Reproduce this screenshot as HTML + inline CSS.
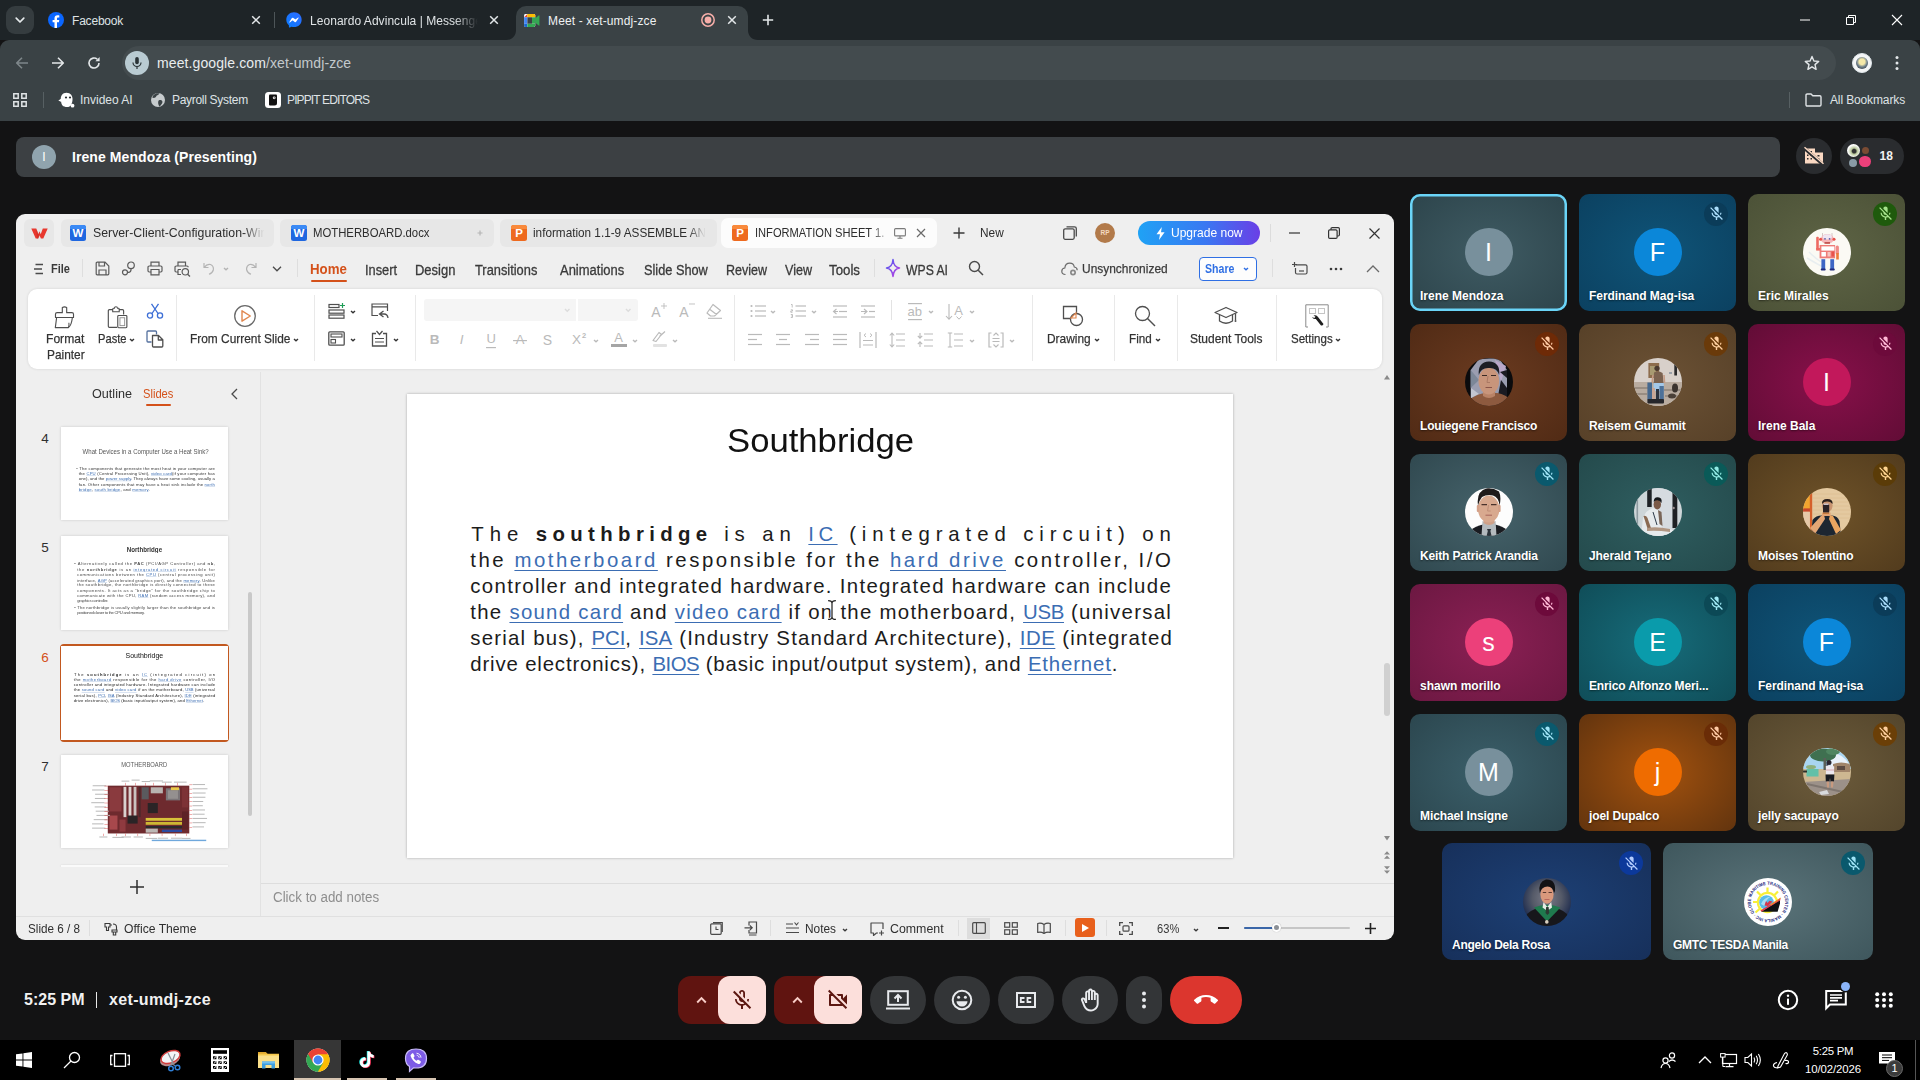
<!DOCTYPE html>
<html>
<head>
<meta charset="utf-8">
<title>Meet</title>
<style>
*{box-sizing:border-box;margin:0;padding:0}
html,body{width:1920px;height:1080px;overflow:hidden;background:#131314;font-family:"Liberation Sans",sans-serif;}
#root{position:fixed;left:0;top:0;width:1920px;height:1080px;overflow:hidden;background:#131314}
.abs{position:absolute}
svg{position:absolute;overflow:visible}
/* ---------- chrome ---------- */
#tabstrip{left:0;top:0;width:1920px;height:40px;background:#1e2427}
#toolbar{left:0;top:40px;width:1920px;height:80.6px;background:#3a4245;border-radius:9px 9px 0 0}
#omni{left:122px;top:46px;width:1714px;height:34px;border-radius:17px;background:#434b4e}
.tabtxt{font-size:12px;color:#dfe3e5;white-space:nowrap;top:13px;line-height:16px}
.bm{font-size:12px;color:#dfe3e5;white-space:nowrap;top:92px;line-height:16px}
#acttab{left:516px;top:6px;width:232px;height:34px;background:#3a4245;border-radius:10px 10px 0 0}
/* ---------- meet ---------- */
#presbar{left:16px;top:137px;width:1764px;height:40px;border-radius:8px;background:#3c4043}
.tile{position:absolute;width:157px;height:117px;border-radius:10px;overflow:hidden}
.tile .nm{position:absolute;left:10px;bottom:8px;font-size:12px;font-weight:bold;color:#fff;white-space:nowrap;text-shadow:0 1px 2px rgba(0,0,0,.5)}
.tile .av{position:absolute;left:50%;top:34.600px;width:48px;height:48px;margin-left:-24px;border-radius:50%;overflow:hidden;color:#fff;font-size:25px;line-height:48px;text-align:center}
.tile .mic{position:absolute;right:8px;top:8px;width:24px;height:24px;border-radius:50%}
/* ---------- wps ---------- */
#wps{left:16px;top:214px;width:1378px;height:726px;border-radius:9px;background:#efefef;overflow:hidden}
#ribbon{left:12px;top:75px;width:1354px;height:79.5px;border-radius:9px;background:#fff;box-shadow:0 0 3px rgba(0,0,0,.12)}
.rt{position:absolute;font-size:13px;color:#222;white-space:nowrap;line-height:16px}
.mt{position:absolute;font-size:14.3px;color:#333;white-space:nowrap;line-height:18px;top:46px}
#slide{left:391px;top:180px;width:825.5px;height:464px;background:#fff;box-shadow:0 0 2.5px rgba(0,0,0,.3)}
.sl{white-space:pre}
.lk{color:#3b6db3;text-decoration:underline;text-decoration-thickness:1px;text-underline-offset:2.5px}
.thumb{position:absolute;left:45px;width:167px;height:94px;background:#fff;box-shadow:0 0 2px rgba(0,0,0,.18)}
.tn{position:absolute;left:25px;font-size:13px;color:#333}
/* ---------- taskbar ---------- */
#taskbar{left:0;top:1040px;width:1920px;height:40px;background:#000}
</style>
</head>
<body>
<div id="root">

<!-- CHROME -->
<div id="tabstrip" class="abs"></div>
<div id="toolbar" class="abs"></div>
<div id="acttab" class="abs"></div>
<div id="omni" class="abs"></div>
<!--CHROME-DETAILS-START-->
<!-- tab search -->
<div class="abs" style="left:6px;top:6px;width:28px;height:28px;border-radius:9px;background:#353c3f"></div>
<svg style="left:14px;top:14px" width="12" height="12" viewBox="0 0 12 12"><path d="M2.2 4.2 L6 8 L9.8 4.2" fill="none" stroke="#e6eaec" stroke-width="1.7" stroke-linecap="round" stroke-linejoin="round"/></svg>
<!-- tab 1 facebook -->
<svg style="left:48px;top:12px" width="16" height="16" viewBox="0 0 16 16"><circle cx="8" cy="8" r="8" fill="#0a66ff"/><path d="M9 16 V10.3 h1.9 l.35-2.3 H9 V6.6 c0-.8.3-1.2 1.2-1.2 h1.1 V3.4 c-.3-.05-1-.13-1.8-.13 -1.9 0-3 1.1-3 3.1 V8 H4.6 v2.3 h1.9 V16z" fill="#fff"/></svg>
<div class="abs tabtxt" style="left:72px;letter-spacing:-.2px">Facebook</div>
<svg style="left:251px;top:15px" width="10" height="10" viewBox="0 0 10 10"><path d="M1.2 1.2 L8.8 8.8 M8.8 1.2 L1.2 8.8" stroke="#e3e7e9" stroke-width="1.5" fill="none"/></svg>
<div class="abs" style="left:274px;top:12px;width:1px;height:16px;background:#4d5558"></div>
<!-- tab 2 messenger -->
<svg style="left:286px;top:12px" width="16" height="16" viewBox="0 0 16 16"><defs><linearGradient id="msg" x1="0" y1="1" x2="1" y2="0"><stop offset="0" stop-color="#0a7cff"/><stop offset="1" stop-color="#2f6bff"/></linearGradient></defs><path d="M8 0.3C3.6.3.3 3.5.3 7.7c0 2.2.9 4.1 2.4 5.4.1.1.2.3.2.5l.04 1.4c.01.4.5.7.9.5l1.5-.7c.13-.06.28-.07.4-.03.7.2 1.45.3 2.2.3 4.4 0 7.7-3.2 7.7-7.4S12.400.3 8 .3z" fill="url(#msg)"/><path d="M3.4 9.9 5.7 6.300c.36-.57 1.1-.7 1.65-.3l1.8 1.35c.17.12.4.12.55 0l2.400-1.85c.32-.25.75.15.53.5L10.300 9.600c-.36.57-1.1.7-1.65.3L6.850 8.550c-.17-.12-.4-.12-.55 0L3.900 10.400c-.32.25-.75-.15-.53-.5z" fill="#fff"/></svg>
<div class="abs tabtxt" style="left:310px;width:168px;overflow:hidden;letter-spacing:.05px;-webkit-mask-image:linear-gradient(90deg,#000 86%,transparent 100%)">Leonardo Advincula | Messenger</div>
<svg style="left:489px;top:15px" width="10" height="10" viewBox="0 0 10 10"><path d="M1.2 1.2 L8.8 8.8 M8.8 1.2 L1.2 8.8" stroke="#e3e7e9" stroke-width="1.5" fill="none"/></svg>
<!-- active tab flares -->
<svg style="left:506px;top:30px" width="10" height="10" viewBox="0 0 10 10"><path d="M0 10 H10 V0 C10 6 6 10 0 10z" fill="#3a4245"/></svg>
<svg style="left:748px;top:30px" width="10" height="10" viewBox="0 0 10 10"><path d="M10 10 H0 V0 C0 6 4 10 10 10z" fill="#3a4245"/></svg>
<!-- meet icon -->
<svg style="left:524px;top:13.500px" width="16" height="13" viewBox="0 0 17 14"><rect x="0" y="0" width="12" height="14" rx="1.5" fill="#fff"/><path d="M0 3.500 L3.500 0 V3.500z" fill="#ea4335"/><path d="M3.500 0 H10.500 Q12 0 12 1.500 V3.500 H3.500z" fill="#fbbc04"/><path d="M0 3.500 H3.500 V10.500 H0z" fill="#4285f4"/><path d="M0 10.500 H3.500 V14 H1.500 Q0 14 0 12.500z" fill="#1967d2"/><path d="M3.500 10.500 H12 V12.500 Q12 14 10.500 14 H3.500z" fill="#34a853"/><path d="M8.500 3.500 H12 V10.500 H8.500z" fill="#34a853"/><path d="M3.500 3.500 H8.500 V10.500 H3.500z" fill="#3a4245"/><path d="M12 4.500 L15.700 1.500 Q16.500 1 16.500 2 V12 Q16.500 13 15.700 12.500 L12 9.500z" fill="#34a853"/></svg>
<div class="abs tabtxt" style="left:548px;letter-spacing:.13px;color:#eef1f2">Meet - xet-umdj-zce</div>
<svg style="left:700px;top:12px" width="16" height="16" viewBox="0 0 16 16"><circle cx="8" cy="8" r="6.2" fill="none" stroke="#f6aea9" stroke-width="1.5"/><circle cx="8" cy="8" r="3.4" fill="#f6aea9"/></svg>
<svg style="left:727px;top:15px" width="10" height="10" viewBox="0 0 10 10"><path d="M1.2 1.2 L8.8 8.8 M8.8 1.2 L1.2 8.8" stroke="#e3e7e9" stroke-width="1.5" fill="none"/></svg>
<svg style="left:762px;top:14px" width="12" height="12" viewBox="0 0 12 12"><path d="M6 .8 V11.200 M.8 6 H11.200" stroke="#e3e7e9" stroke-width="1.6" fill="none"/></svg>
<!-- window controls -->
<svg style="left:1800px;top:15px" width="10" height="10" viewBox="0 0 10 10"><path d="M0 5 H10" stroke="#fff" stroke-width="1"/></svg>
<svg style="left:1846px;top:15px" width="10" height="10" viewBox="0 0 10 10"><path d="M.5 2.500 H7.500 V9.500 H.5z M2.500 2.500 V.5 H9.500 V7.500 H7.500" stroke="#fff" stroke-width="1" fill="none"/></svg>
<svg style="left:1892px;top:15px" width="10" height="10" viewBox="0 0 10 10"><path d="M0 0 L10 10 M10 0 L0 10" stroke="#fff" stroke-width="1.1"/></svg>
<!-- nav buttons -->
<svg style="left:15px;top:56px" width="14" height="14" viewBox="0 0 14 14"><path d="M13 7 H2 M7 1.700 L1.700 7 L7 12.300" stroke="#7e878a" stroke-width="1.6" fill="none" stroke-linejoin="round"/></svg>
<svg style="left:51px;top:56px" width="14" height="14" viewBox="0 0 14 14"><path d="M1 7 H12 M7 1.700 L12.300 7 L7 12.300" stroke="#e3e7e9" stroke-width="1.6" fill="none" stroke-linejoin="round"/></svg>
<svg style="left:87px;top:56px" width="14" height="14" viewBox="0 0 14 14"><path d="M12 7 A5 5 0 1 1 10.300 3.250" stroke="#e3e7e9" stroke-width="1.6" fill="none"/><path d="M12.600 1 V5.200 H8.400z" fill="#e3e7e9"/></svg>
<!-- mic chip -->
<div class="abs" style="left:125px;top:51px;width:24px;height:24px;border-radius:12px;background:#b9cbd2"></div>
<svg style="left:131px;top:56px" width="12" height="14" viewBox="0 0 12 14"><rect x="4.200" y="1" width="3.600" height="7.200" rx="1.800" fill="#2a3336"/><path d="M2 6.500 A4 4 0 0 0 10 6.500 M6 10.500 V13" stroke="#2a3336" stroke-width="1.200" fill="none"/></svg>
<div class="abs" style="left:157px;top:54px;font-size:14px;line-height:18px;color:#e9edef;white-space:nowrap;letter-spacing:.1px">meet.google.com<span style="color:#c3c9cc">/xet-umdj-zce</span></div>
<!-- star, avatar, menu -->
<svg style="left:1804px;top:55px" width="16" height="16" viewBox="0 0 16 16"><path d="M8 1.500 L9.900 6 L14.700 6.400 L11 9.600 L12.100 14.300 L8 11.800 L3.900 14.300 L5 9.600 L1.300 6.400 L6.100 6z" fill="none" stroke="#e3e7e9" stroke-width="1.400" stroke-linejoin="round"/></svg>
<div class="abs" style="left:1852px;top:53px;width:20px;height:20px;border-radius:10px;background:#f4f6f7;border:1.500px solid #dfe6ea"></div>
<div class="abs" style="left:1856px;top:57px;width:12px;height:12px;border-radius:6px;background:radial-gradient(circle at 50% 40%,#f5e9a8 0 30%,#6d7f8c 55%,#222 100%)"></div>
<svg style="left:1895px;top:55px" width="4" height="16" viewBox="0 0 4 16"><circle cx="2" cy="2.500" r="1.500" fill="#e3e7e9"/><circle cx="2" cy="8" r="1.500" fill="#e3e7e9"/><circle cx="2" cy="13.500" r="1.500" fill="#e3e7e9"/></svg>
<!-- bookmarks -->
<svg style="left:13px;top:93px" width="14" height="14" viewBox="0 0 14 14"><path d="M.8.8h4.400v4.400H.8z M8.800.8h4.400v4.400H8.800z M.8 8.800h4.400v4.400H.8z M8.800 8.800h4.400v4.400H8.800z" fill="none" stroke="#dfe3e5" stroke-width="1.500"/></svg>
<div class="abs" style="left:43px;top:92px;width:1px;height:16px;background:#576063"></div>
<svg style="left:58px;top:92px" width="17" height="16" viewBox="0 0 17 16"><path d="M3 9 C2 4 4.500 .8 8.500 .8 S15 4 14.500 8 C14.300 10.500 13.500 13.500 11.500 14.500 C9.500 15.500 6 15 4.500 13.500 C3.500 12.500 3.200 10.500 3 9z" fill="#fff"/><path d="M3.500 6.500 L.3 8.500 L3.300 10z" fill="#fff"/><circle cx="14.500" cy="13.700" r="1.900" fill="#fff"/><circle cx="8" cy="5.500" r="1.100" fill="#2a3033"/><circle cx="12" cy="5.500" r="1.100" fill="#2a3033"/></svg>
<div class="abs bm" style="left:80px">Invideo AI</div>
<svg style="left:150px;top:92px" width="16" height="16" viewBox="0 0 16 16"><circle cx="8" cy="8" r="7" fill="#c6cbcd"/><path d="M2.200 5.500 C4 6.300 5.500 5.800 6.300 4.300 C6.800 3.300 8 3.400 8.600 2.600 L9.400 1.300 C8.500 1.100 7 1 5.800 1.500 C4.200 2.200 2.800 3.700 2.200 5.500z M9 8.300 C10.300 7.600 11.800 8.200 12.300 9.300 C12.800 10.500 12 11.500 11.300 12.600 C10.800 13.300 10.300 13.800 9.700 14.600 C9 13.500 8.300 12.600 8.200 11.400 C8.100 10.200 8.200 8.900 9 8.300z" fill="#3a4245"/></svg>
<div class="abs bm" style="left:172px;letter-spacing:-.3px">Payroll System</div>
<div class="abs" style="left:265px;top:92px;width:16px;height:16px;border-radius:3.500px;background:#fff"></div>
<svg style="left:268px;top:94px" width="10" height="12" viewBox="0 0 10 12"><path d="M1 1.500 Q1 .5 2 .5 H8 Q9 .5 9 1.500 V9 Q9 11.500 6.500 11.500 H2 Q1 11.500 1 10.500z" fill="#111"/><circle cx="6.200" cy="3.800" r="1.400" fill="#fff"/><circle cx="6.200" cy="3.800" r=".6" fill="#111"/></svg>
<div class="abs bm" style="left:287px;letter-spacing:-.87px">PIPPIT EDITORS</div>
<div class="abs" style="left:1789px;top:92px;width:1px;height:16px;background:#576063"></div>
<svg style="left:1805px;top:93px" width="17" height="14" viewBox="0 0 17 14"><path d="M1 2.200 Q1 1 2.200 1 H6 L7.800 2.800 H14.800 Q16 2.800 16 4 V11.800 Q16 13 14.800 13 H2.200 Q1 13 1 11.800z" fill="none" stroke="#dfe3e5" stroke-width="1.400"/></svg>
<div class="abs bm" style="left:1830px;letter-spacing:-.13px">All Bookmarks</div>
<!--CHROME-DETAILS-END-->

<!-- MEET -->
<div id="presbar" class="abs"></div>
<!--MEET-DETAILS-START-->
<div class="abs" style="left:32px;top:145px;width:24px;height:24px;border-radius:12px;background:#90a4ae;color:#fff;font-size:12px;line-height:24px;text-align:center">I</div>
<div class="abs" style="left:72px;top:148px;font-size:14px;font-weight:bold;color:#fff;line-height:18px;white-space:nowrap;letter-spacing:.08px">Irene Mendoza (Presenting)</div>
<div class="abs" style="left:1796px;top:138px;width:36px;height:36px;border-radius:18px;background:#2a2c2f"></div>
<svg style="left:1804px;top:147px" width="20" height="18" viewBox="0 0 20 18"><path d="M1 1.500 V16.500 H19 V5.500 H11 V1.500z" fill="#fbd9c3"/><g fill="#2a2c2f"><rect x="3" y="4" width="1.500" height="1.500"/><rect x="6.500" y="4" width="1.500" height="1.500"/><rect x="3" y="7.500" width="1.500" height="1.500"/><rect x="6.500" y="7.500" width="1.500" height="1.500"/><rect x="3" y="11" width="1.500" height="1.500"/><rect x="6.500" y="11" width="1.500" height="1.500"/><rect x="13.500" y="8" width="2" height="1.500"/><rect x="13.500" y="11.500" width="2" height="1.500"/></g><path d="M0 1 L19 17.500" stroke="#2a2c2f" stroke-width="3.200"/><path d="M.5 .3 L19.500 16.800" stroke="#fbd9c3" stroke-width="1.500"/></svg>
<div class="abs" style="left:1840px;top:138px;width:64px;height:36px;border-radius:18px;background:#2a2c2f"></div>
<div class="abs" style="left:1847px;top:143.500px;width:13px;height:13px;border-radius:50%;background:radial-gradient(circle at 55% 55%,#333 0 18%,#b9c79a 30%,#fff 62%)"></div>
<div class="abs" style="left:1861.500px;top:146.500px;width:7px;height:7px;border-radius:50%;background:#7a4b33"></div>
<div class="abs" style="left:1849px;top:159px;width:8px;height:8px;border-radius:50%;background:#8a9ba6"></div>
<div class="abs" style="left:1859px;top:155.500px;width:11.500px;height:11.500px;border-radius:50%;background:#ec407a"></div>
<div class="abs" style="left:1879.500px;top:148px;font-size:12px;font-weight:bold;color:#f1f1f1;line-height:16px">18</div>
<!--MEET-DETAILS-END-->

<!-- WPS -->
<div id="wps" class="abs">
  <div id="ribbon" class="abs"></div>
  <div id="slide" class="abs"><!--SLIDE-START--><div class="abs" style="left:319.5px;top:26.9px;font-size:33.500px;line-height:40px;color:#111;white-space:nowrap;transform:scaleX(1.0350);transform-origin:0 50%">Southbridge</div><div class="abs sl" style="left:64.3px;top:127.0px;font-size:20.4px;line-height:26px;letter-spacing:5.913px;color:#1c1c1c">The <b><span style="letter-spacing:5.363px">southbridge</span></b> is an <span class="lk"><span style="letter-spacing:4.413px">IC</span></span> (integrated circuit) on</div><div class="abs sl" style="left:63.3px;top:153.0px;font-size:20.4px;line-height:26px;letter-spacing:2.527px;color:#1c1c1c">the <span class="lk">motherboard</span> responsible for the <span class="lk">hard drive</span> controller, I/O</div><div class="abs sl" style="left:63.3px;top:179.0px;font-size:20.4px;line-height:26px;letter-spacing:1.322px;color:#1c1c1c">controller and integrated hardware. Integrated hardware can include</div><div class="abs sl" style="left:63.3px;top:204.9px;font-size:20.4px;line-height:26px;letter-spacing:1.275px;color:#1c1c1c">the <span class="lk">sound card</span> and <span class="lk">video card</span> if on the motherboard, <span class="lk"><span style="letter-spacing:-0.325px">USB</span></span> (universal</div><div class="abs sl" style="left:63.3px;top:230.8px;font-size:20.4px;line-height:26px;letter-spacing:1.218px;color:#1c1c1c">serial bus), <span class="lk"><span style="letter-spacing:-0.082px">PCI</span></span>, <span class="lk"><span style="letter-spacing:0.118px">ISA</span></span> (Industry Standard Architecture), <span class="lk"><span style="letter-spacing:0.518px">IDE</span></span> (integrated</div><div class="abs sl" style="left:63.3px;top:256.8px;font-size:20.4px;line-height:26px;letter-spacing:0.832px;color:#1c1c1c">drive electronics), <span class="lk"><span style="letter-spacing:-0.468px">BIOS</span></span> (basic input/output system), and <span class="lk">Ethernet</span>.</div><!--SLIDE-END--></div>
  <!--WPS-DETAILS-->
</div>

<!--WPSX-START-->
<div class="abs" style="left:24px;top:219px;width:30px;height:28px;background:#e7e7e7;border-radius:6px"></div>
<svg style="left:30.5px;top:227.0px" width="17" height="12" viewBox="0 0 17 12"><path d="M.3 1.600 H5.200 L7.300 7.200 L8.500 4.300 L9.700 7.200 L11.800 1.600 H16.700 L12.300 11.400 H9.900 L8.500 8.200 L7.100 11.400 H4.700z" fill="#e8382e"/><path d="M5.200 1.600 L8.500 9 L7.300 11.400 H6z" fill="#c92a22" opacity=".55"/></svg>
<div class="abs" style="left:61px;top:219px;width:213px;height:28px;background:#e7e7e7;border-radius:6px"></div>
<div class="abs" style="left:280px;top:219px;width:214px;height:28px;background:#e7e7e7;border-radius:6px"></div>
<div class="abs" style="left:500px;top:219px;width:217px;height:28px;background:#e7e7e7;border-radius:6px"></div>
<div class="abs" style="left:721px;top:218px;width:216px;height:30px;background:#fcfcfc;border-radius:7px"></div>
<svg style="left:70.0px;top:225.0px" width="16" height="16" viewBox="0 0 16 16"><rect width="16" height="16" rx="2.500" fill="#1f67e0"/><rect x="0" y="0" width="16" height="8" rx="2.500" fill="#3b8af5"/><rect x="0" y="4" width="16" height="8" fill="#1f67e0"/><text x="8" y="12.300" font-family="Liberation Sans" font-weight="bold" font-size="11.500" fill="#fff" text-anchor="middle">W</text></svg>
<div class="abs" style="left:92.5px;top:224.4px;font-size:13px;font-weight:normal;color:#2d2d2d;line-height:17px;white-space:nowrap;transform:scaleX(0.9458);transform-origin:0 50%;-webkit-mask-image:linear-gradient(90deg,#000 88%,transparent 100%);">Server-Client-Configuration-Wir</div>
<svg style="left:290.5px;top:225.0px" width="16" height="16" viewBox="0 0 16 16"><rect width="16" height="16" rx="2.500" fill="#1f67e0"/><rect x="0" y="0" width="16" height="8" rx="2.500" fill="#3b8af5"/><rect x="0" y="4" width="16" height="8" fill="#1f67e0"/><text x="8" y="12.300" font-family="Liberation Sans" font-weight="bold" font-size="11.500" fill="#fff" text-anchor="middle">W</text></svg>
<div class="abs" style="left:313.0px;top:224.4px;font-size:13px;font-weight:normal;color:#2d2d2d;line-height:17px;white-space:nowrap;transform:scaleX(0.8717);transform-origin:0 50%;">MOTHERBOARD.docx</div>
<svg style="left:476.5px;top:230.0px" width="6" height="6" viewBox="0 0 6 6"><path d="M3 .5 V5.500 M.5 3 H5.500" stroke="#b5b5b5" stroke-width="1.200"/></svg>
<svg style="left:510.5px;top:225.0px" width="16" height="16" viewBox="0 0 16 16"><rect width="16" height="16" rx="2.500" fill="#ee6a1f"/><rect x="0" y="0" width="16" height="8" rx="2.500" fill="#f98a3c"/><rect x="0" y="4" width="16" height="8" fill="#ee6a1f"/><text x="8" y="12.300" font-family="Liberation Sans" font-weight="bold" font-size="11.500" fill="#fff" text-anchor="middle">P</text></svg>
<div class="abs" style="left:533.0px;top:224.4px;font-size:13px;font-weight:normal;color:#2d2d2d;line-height:17px;white-space:nowrap;transform:scaleX(0.9035);transform-origin:0 50%;-webkit-mask-image:linear-gradient(90deg,#000 90%,transparent 100%);">information 1.1-9 ASSEMBLE AN</div>
<svg style="left:732.0px;top:225.0px" width="16" height="16" viewBox="0 0 16 16"><rect width="16" height="16" rx="2.500" fill="#ee6a1f"/><rect x="0" y="0" width="16" height="8" rx="2.500" fill="#f98a3c"/><rect x="0" y="4" width="16" height="8" fill="#ee6a1f"/><text x="8" y="12.300" font-family="Liberation Sans" font-weight="bold" font-size="11.500" fill="#fff" text-anchor="middle">P</text></svg>
<div class="abs" style="left:754.7px;top:224.4px;font-size:13px;font-weight:normal;color:#2d2d2d;line-height:17px;white-space:nowrap;transform:scaleX(0.8551);transform-origin:0 50%;-webkit-mask-image:linear-gradient(90deg,#000 90%,rgba(0,0,0,.35) 100%);">INFORMATION SHEET 1.</div>
<svg style="left:893.5px;top:227.5px" width="12" height="11" viewBox="0 0 12 11"><rect x=".6" y=".6" width="10.800" height="7.300" rx="1" fill="none" stroke="#7a7a7a" stroke-width="1.100"/><path d="M6 8 V10 M3.500 10.300 H8.500" stroke="#7a7a7a" stroke-width="1.100"/></svg>
<svg style="left:916.3px;top:228.0px" width="10" height="10" viewBox="0 0 10 10"><path d="M1 1 L9 9 M9 1 L1 9" stroke="#6a6a6a" stroke-width="1.200"/></svg>
<svg style="left:953.0px;top:227.0px" width="12" height="12" viewBox="0 0 12 12"><path d="M6 .5 V11.500 M.5 6 H11.500" stroke="#3a3a3a" stroke-width="1.400"/></svg>
<div class="abs" style="left:980.0px;top:224.4px;font-size:13px;font-weight:normal;color:#2d2d2d;line-height:17px;white-space:nowrap;transform:scaleX(0.9110);transform-origin:0 50%;">New</div>
<svg style="left:1063.4px;top:226.0px" width="14" height="14" viewBox="0 0 14 14"><rect x=".7" y="2.800" width="10.500" height="10.500" rx="1.500" fill="none" stroke="#4a4a4a" stroke-width="1.300"/><path d="M3.500 .8 H11.500 Q13.300 .8 13.300 2.600 V10.500" fill="none" stroke="#4a4a4a" stroke-width="1.300"/></svg>
<div class="abs" style="left:1095px;top:223px;width:20px;height:20px;border-radius:50%;background:#b27a4a;color:#f4d9c0;font-size:6.500px;font-weight:bold;line-height:20px;text-align:center">RP</div>
<div class="abs" style="left:1137.5px;top:221px;width:122px;height:24px;background:linear-gradient(90deg,#1fa2f5 0%,#3a78f2 55%,#6a3fe6 100%);border-radius:12px"></div>
<svg style="left:1155.5px;top:226.5px" width="9" height="13" viewBox="0 0 9 13"><path d="M5.800 0 L.5 7.300 H4 L3 13 L8.600 5.300 H5z" fill="#fff"/></svg>
<div class="abs" style="left:1171.0px;top:224.4px;font-size:13px;font-weight:normal;color:#fff;line-height:17px;white-space:nowrap;transform:scaleX(0.9246);transform-origin:0 50%;">Upgrade now</div>
<div class="abs" style="left:1270px;top:224px;width:1px;height:18px;background:#dcdcdc;"></div>
<svg style="left:1288.5px;top:232.0px" width="11" height="2" viewBox="0 0 11 2"><path d="M0 1 H11" stroke="#333" stroke-width="1.200"/></svg>
<svg style="left:1328.0px;top:227.0px" width="12" height="12" viewBox="0 0 12 12"><rect x=".6" y="2.900" width="8.500" height="8.500" rx="1.200" fill="none" stroke="#333" stroke-width="1.200"/><path d="M3 2.700 V1.800 Q3 .6 4.200 .6 H10.200 Q11.400 .6 11.400 1.800 V7.800 Q11.400 9 10.200 9 H9.300" fill="none" stroke="#333" stroke-width="1.200"/></svg>
<svg style="left:1369.0px;top:227.5px" width="11" height="11" viewBox="0 0 11 11"><path d="M.5 .5 L10.500 10.500 M10.500 .5 L.5 10.500" stroke="#333" stroke-width="1.200"/></svg>
<svg style="left:34.0px;top:262.5px" width="10" height="12" viewBox="0 0 10 12"><path d="M1.500 1.500 H9 M0 6 H8 M1.500 10.500 H9" stroke="#4a4a4a" stroke-width="1.300"/></svg>
<div class="abs" style="left:51.0px;top:260.0px;font-size:13.5px;font-weight:bold;color:#3a3a3a;line-height:18px;white-space:nowrap;transform:scaleX(0.8167);transform-origin:0 50%;">File</div>
<div class="abs" style="left:82px;top:259px;width:1px;height:18px;background:#dedede;"></div>
<svg style="left:94.9px;top:261.0px" width="15" height="15" viewBox="0 0 15 15"><path d="M1.200 2.200 Q1.200 1.200 2.200 1.200 H10 L13.800 5 V12.800 Q13.800 13.800 12.800 13.800 H2.200 Q1.200 13.800 1.200 12.800z M4 1.500 V5 H9.500 V1.500 M4 13.500 V9 H11 V13.500" fill="none" stroke="#5a5a5a" stroke-width="1.200"/></svg>
<svg style="left:120.8px;top:261.0px" width="15" height="15" viewBox="0 0 15 15"><circle cx="10" cy="4.300" r="3.300" fill="none" stroke="#5a5a5a" stroke-width="1.200"/><circle cx="4" cy="11.300" r="2.500" fill="none" stroke="#5a5a5a" stroke-width="1.200"/><path d="M6.500 11.300 H7.500 Q10 11.300 10 8.800 V7.600" fill="none" stroke="#5a5a5a" stroke-width="1.200"/></svg>
<svg style="left:147.3px;top:261.0px" width="16" height="15" viewBox="0 0 16 15"><path d="M4 5 V1.200 H12 V5 M4 11 H2.200 Q1 11 1 9.800 V6.200 Q1 5 2.200 5 H13.800 Q15 5 15 6.200 V9.800 Q15 11 13.800 11 H12 M4 8.500 H12 V13.800 H4z" fill="none" stroke="#5a5a5a" stroke-width="1.200"/></svg>
<svg style="left:173.5px;top:260.5px" width="17" height="16" viewBox="0 0 17 16"><path d="M4 5 V1.200 H11.500 V5 M4 11 H2.200 Q1 11 1 9.800 V6.200 Q1 5 2.200 5 H13 Q14.200 5 14.200 6.200 M4 8.500 H7 M4 8.500 V13.500 H7" fill="none" stroke="#5a5a5a" stroke-width="1.200"/><circle cx="11.300" cy="10.800" r="3.200" fill="none" stroke="#5a5a5a" stroke-width="1.200"/><path d="M13.600 13.200 L16 15.500" stroke="#5a5a5a" stroke-width="1.300"/></svg>
<svg style="left:203.3px;top:262.0px" width="12" height="13" viewBox="0 0 12 13"><path d="M1 1 V5.500 H5.500 M1.300 5.300 Q4 1.500 7.500 2.500 Q11 4 10.300 8 Q9.500 11 6 12.300" fill="none" stroke="#b4b4b4" stroke-width="1.200"/></svg>
<svg style="left:223.0px;top:267.0px" width="6" height="4" viewBox="0 0 6 4"><path d="M1 1 L3.0 2.8 L5 1" fill="none" stroke="#b4b4b4" stroke-width="1.4"/></svg>
<svg style="left:244.8px;top:262.0px" width="12" height="13" viewBox="0 0 12 13"><path d="M11 1 V5.500 H6.500 M10.700 5.300 Q8 1.500 4.500 2.500 Q1 4 1.700 8 Q2.500 11 6 12.300" fill="none" stroke="#b4b4b4" stroke-width="1.200"/></svg>
<svg style="left:271.7px;top:266.0px" width="10" height="6" viewBox="0 0 10 6"><path d="M1 .8 L5 4.800 L9 .8" fill="none" stroke="#4a4a4a" stroke-width="1.300"/></svg>
<div class="abs" style="left:297px;top:259px;width:1px;height:18px;background:#dedede;"></div>
<div class="abs" style="left:310.2px;top:260.3px;font-size:14px;font-weight:bold;color:#d4511a;line-height:18px;white-space:nowrap;transform:scaleX(0.9459);transform-origin:0 50%;">Home</div>
<div class="abs" style="left:311px;top:280px;width:35.5px;height:2px;background:#d4511a;border-radius:1px"></div>
<div class="abs" style="left:364.6px;top:260.6px;font-size:14px;font-weight:normal;color:#3a3a3a;line-height:18px;white-space:nowrap;transform:scaleX(0.9139);transform-origin:0 50%;-webkit-text-stroke:.3px #3a3a3a;">Insert</div>
<div class="abs" style="left:414.9px;top:260.6px;font-size:14px;font-weight:normal;color:#3a3a3a;line-height:18px;white-space:nowrap;transform:scaleX(0.9267);transform-origin:0 50%;-webkit-text-stroke:.3px #3a3a3a;">Design</div>
<div class="abs" style="left:474.7px;top:260.6px;font-size:14px;font-weight:normal;color:#3a3a3a;line-height:18px;white-space:nowrap;transform:scaleX(0.9168);transform-origin:0 50%;-webkit-text-stroke:.3px #3a3a3a;">Transitions</div>
<div class="abs" style="left:559.6px;top:260.6px;font-size:14px;font-weight:normal;color:#3a3a3a;line-height:18px;white-space:nowrap;transform:scaleX(0.9269);transform-origin:0 50%;-webkit-text-stroke:.3px #3a3a3a;">Animations</div>
<div class="abs" style="left:644.2px;top:260.6px;font-size:14px;font-weight:normal;color:#3a3a3a;line-height:18px;white-space:nowrap;transform:scaleX(0.9108);transform-origin:0 50%;-webkit-text-stroke:.3px #3a3a3a;">Slide Show</div>
<div class="abs" style="left:726.0px;top:260.6px;font-size:14px;font-weight:normal;color:#3a3a3a;line-height:18px;white-space:nowrap;transform:scaleX(0.8931);transform-origin:0 50%;-webkit-text-stroke:.3px #3a3a3a;">Review</div>
<div class="abs" style="left:785.0px;top:260.6px;font-size:14px;font-weight:normal;color:#3a3a3a;line-height:18px;white-space:nowrap;transform:scaleX(0.8972);transform-origin:0 50%;-webkit-text-stroke:.3px #3a3a3a;">View</div>
<div class="abs" style="left:829.0px;top:260.6px;font-size:14px;font-weight:normal;color:#3a3a3a;line-height:18px;white-space:nowrap;transform:scaleX(0.9484);transform-origin:0 50%;-webkit-text-stroke:.3px #3a3a3a;">Tools</div>
<div class="abs" style="left:873.5px;top:259px;width:1px;height:18px;background:#dedede;"></div>
<svg style="left:886.0px;top:258.5px" width="14" height="18" viewBox="0 0 14 18"><defs><linearGradient id="ai" x1="0" y1="0" x2="1" y2="1"><stop offset="0" stop-color="#4a5cf0"/><stop offset="1" stop-color="#c23fe0"/></linearGradient></defs><path d="M7 .5 Q7.500 8 13.500 9 Q7.500 10 7 17.500 Q6.500 10 .5 9 Q6.500 8 7 .5z" fill="none" stroke="url(#ai)" stroke-width="1.500" stroke-linejoin="round"/></svg>
<div class="abs" style="left:906.0px;top:260.6px;font-size:14px;font-weight:normal;color:#3a3a3a;line-height:18px;white-space:nowrap;transform:scaleX(0.8707);transform-origin:0 50%;-webkit-text-stroke:.3px #3a3a3a;">WPS AI</div>
<svg style="left:968.0px;top:260.0px" width="16" height="16" viewBox="0 0 16 16"><circle cx="6.500" cy="6.500" r="5" fill="none" stroke="#4a4a4a" stroke-width="1.400"/><path d="M10.200 10.200 L15 15" stroke="#4a4a4a" stroke-width="1.500"/></svg>
<svg style="left:1060.5px;top:261.5px" width="17" height="14" viewBox="0 0 17 14"><path d="M4.500 12.500 Q.8 12.500 .8 9.200 Q.8 6.300 3.800 6 Q4.300 1.200 8.800 1.200 Q12.600 1.200 13.300 5 Q16.200 5.300 16.200 8.300" fill="none" stroke="#6a6a6a" stroke-width="1.200"/><circle cx="12" cy="10.500" r="3" fill="#8a8a8a"/><circle cx="12" cy="10.500" r="1.200" fill="#f0f0f0"/></svg>
<div class="abs" style="left:1082.0px;top:260.0px;font-size:13.5px;font-weight:normal;color:#3a3a3a;line-height:18px;white-space:nowrap;transform:scaleX(0.8852);transform-origin:0 50%;-webkit-text-stroke:.25px #3a3a3a;">Unsynchronized</div>
<div class="abs" style="left:1198.7px;top:256.5px;width:58px;height:24px;background:#fdfdfd;border:1.300px solid #2f6fe4;border-radius:4px"></div>
<div class="abs" style="left:1205.0px;top:259.5px;font-size:13.5px;font-weight:bold;color:#2f6fe4;line-height:18px;white-space:nowrap;transform:scaleX(0.7833);transform-origin:0 50%;">Share</div>
<svg style="left:1242.8px;top:267.0px" width="6" height="4" viewBox="0 0 6 4"><path d="M1 1 L3.0 2.8 L5 1" fill="none" stroke="#2f6fe4" stroke-width="1.4"/></svg>
<div class="abs" style="left:1272px;top:259px;width:1px;height:18px;background:#dedede;"></div>
<svg style="left:1291.7px;top:262.0px" width="16" height="13" viewBox="0 0 16 13"><path d="M3.500 2.800 H13.500 Q15 2.800 15 4.300 V10.500 Q15 12 13.500 12 H5 Q3.500 12 3.500 10.500 V6" fill="none" stroke="#4a4a4a" stroke-width="1.200"/><path d="M2.500 0 V5 M0 2.500 H5" stroke="#4a4a4a" stroke-width="1.200"/><path d="M7 9 H12" stroke="#4a4a4a" stroke-width="1.200"/></svg>
<svg style="left:1329.0px;top:266.5px" width="14" height="4" viewBox="0 0 14 4"><circle cx="2" cy="2" r="1.300" fill="#3a3a3a"/><circle cx="7" cy="2" r="1.300" fill="#3a3a3a"/><circle cx="12" cy="2" r="1.300" fill="#3a3a3a"/></svg>
<svg style="left:1365.6px;top:264.5px" width="14" height="8" viewBox="0 0 14 8"><path d="M1 7 L7 1 L13 7" fill="none" stroke="#6a6a6a" stroke-width="1.300"/></svg>
<div class="abs" style="left:176px;top:295px;width:1px;height:66px;background:#e9e9e9;"></div>
<div class="abs" style="left:314.4px;top:295px;width:1px;height:66px;background:#e9e9e9;"></div>
<div class="abs" style="left:414.6px;top:295px;width:1px;height:66px;background:#e9e9e9;"></div>
<div class="abs" style="left:734.2px;top:295px;width:1px;height:66px;background:#e9e9e9;"></div>
<div class="abs" style="left:1032.4px;top:295px;width:1px;height:66px;background:#e9e9e9;"></div>
<div class="abs" style="left:1114.3px;top:295px;width:1px;height:66px;background:#e9e9e9;"></div>
<div class="abs" style="left:1176.5px;top:295px;width:1px;height:66px;background:#e9e9e9;"></div>
<div class="abs" style="left:1276.2px;top:295px;width:1px;height:66px;background:#e9e9e9;"></div>
<svg style="left:53.5px;top:305.5px" width="21" height="23" viewBox="0 0 24 26"><path d="M9.500 1.500 Q12 .3 14.500 1.500 V7.500 H20.500 Q22.300 7.500 22.300 9.300 V13 H1.700 V9.300 Q1.700 7.500 3.500 7.500 H9.500z" fill="none" stroke="#4f4f4f" stroke-width="1.300" stroke-linejoin="round"/><path d="M3 13 L1.500 24.500 H16.500 Q20 22 21 13" fill="none" stroke="#4f4f4f" stroke-width="1.300" stroke-linejoin="round"/><path d="M16.500 24.500 Q17.500 21.500 17 19" fill="none" stroke="#4f4f4f" stroke-width="1.200"/></svg>
<div class="abs" style="left:45.6px;top:330.3px;font-size:13.5px;font-weight:normal;color:#333;line-height:18px;white-space:nowrap;transform:scaleX(0.8956);transform-origin:0 50%;-webkit-text-stroke:.25px #333;">Format</div>
<div class="abs" style="left:47.4px;top:346.0px;font-size:13.5px;font-weight:normal;color:#333;line-height:18px;white-space:nowrap;transform:scaleX(0.8789);transform-origin:0 50%;-webkit-text-stroke:.25px #333;">Painter</div>
<svg style="left:106.5px;top:305.5px" width="21" height="23" viewBox="0 0 24 26"><path d="M7 4 H2.800 Q1.500 4 1.500 5.300 V23 Q1.500 24.300 2.800 24.300 H11.500 M13.500 4 H17.700 Q19 4 19 5.300 V9.500" fill="none" stroke="#4f4f4f" stroke-width="1.300"/><path d="M6.500 6.500 V3.500 Q6.500 2.500 7.500 2.500 H8.500 Q8.500 .8 10.250 .8 Q12 .8 12 2.500 H13 Q14 2.500 14 3.500 V6.500z" fill="none" stroke="#4f4f4f" stroke-width="1.200"/><rect x="12.300" y="10.700" width="10.400" height="14" rx="1" fill="none" stroke="#4f4f4f" stroke-width="1.300"/><rect x="14.800" y="13.300" width="5.400" height="9" fill="none" stroke="#8a8a8a" stroke-width="1"/></svg>
<div class="abs" style="left:98.0px;top:330.3px;font-size:13.5px;font-weight:normal;color:#333;line-height:18px;white-space:nowrap;transform:scaleX(0.8253);transform-origin:0 50%;-webkit-text-stroke:.25px #333;">Paste</div>
<svg style="left:129.3px;top:338.0px" width="6" height="4" viewBox="0 0 6 4"><path d="M1 1 L3.0 2.8 L5 1" fill="none" stroke="#333" stroke-width="1.4"/></svg>
<svg style="left:146.0px;top:303.0px" width="18" height="16" viewBox="0 0 18 16"><path d="M5.500 .8 L12 10.500 M12.500 .8 L6 10.500" stroke="#3d6fd6" stroke-width="1.300" fill="none"/><circle cx="4" cy="12.500" r="2.600" fill="none" stroke="#3d6fd6" stroke-width="1.300"/><circle cx="14" cy="12.500" r="2.600" fill="none" stroke="#3d6fd6" stroke-width="1.300"/></svg>
<svg style="left:146.0px;top:330.0px" width="18" height="18" viewBox="0 0 18 18"><path d="M10.500 4.500 V2 Q10.500 1 9.500 1 H2 Q1 1 1 2 V11 Q1 12 2 12 H5.500" fill="none" stroke="#54709e" stroke-width="1.300"/><path d="M6.500 5.500 H12.500 L16.800 9.800 V16 Q16.800 17 15.800 17 H7.500 Q6.500 17 6.500 16z M12.300 5.700 V10 H16.600" fill="none" stroke="#4f4f4f" stroke-width="1.300" stroke-linejoin="round"/></svg>
<svg style="left:233.0px;top:304.0px" width="24" height="24" viewBox="0 0 24 24"><circle cx="12" cy="12" r="10.300" fill="none" stroke="#6a6a6a" stroke-width="1.300"/><path d="M9 6.800 L17.300 12 L9 17.200z" fill="none" stroke="#e0864e" stroke-width="1.400" stroke-linejoin="round"/></svg>
<div class="abs" style="left:190.0px;top:330.3px;font-size:13.5px;font-weight:normal;color:#333;line-height:18px;white-space:nowrap;transform:scaleX(0.8812);transform-origin:0 50%;-webkit-text-stroke:.25px #333;">From Current Slide</div>
<svg style="left:293.3px;top:338.0px" width="6" height="4" viewBox="0 0 6 4"><path d="M1 1 L3.0 2.8 L5 1" fill="none" stroke="#333" stroke-width="1.4"/></svg>
<svg style="left:328.0px;top:303.0px" width="18" height="16" viewBox="0 0 18 16"><rect x="1" y="1.500" width="10" height="3" fill="none" stroke="#4f4f4f" stroke-width="1.200"/><rect x="1" y="7" width="15" height="3.200" fill="none" stroke="#4f4f4f" stroke-width="1.200"/><rect x="1" y="12" width="15" height="3.200" fill="none" stroke="#4f4f4f" stroke-width="1.200"/><path d="M14.500 0 V5 M12 2.500 H17" stroke="#1f9d57" stroke-width="1.200"/></svg>
<svg style="left:350.4px;top:310.0px" width="6" height="4" viewBox="0 0 6 4"><path d="M1 1 L3.0 2.8 L5 1" fill="none" stroke="#333" stroke-width="1.4"/></svg>
<svg style="left:370.5px;top:303.0px" width="18" height="16" viewBox="0 0 18 16"><path d="M16.500 8 V1 H1 V12.500 H7 M1 3.800 H16.500" fill="none" stroke="#4f4f4f" stroke-width="1.200"/><path d="M12.500 8 L8.500 11 L12.500 14 M8.800 11 H13 Q16.500 11 17 15" fill="none" stroke="#4f4f4f" stroke-width="1.300"/></svg>
<svg style="left:328.0px;top:331.3px" width="18" height="15" viewBox="0 0 18 15"><rect x=".8" y=".8" width="15.400" height="13.400" rx="1" fill="none" stroke="#4f4f4f" stroke-width="1.300"/><rect x="3" y="3" width="11" height="3" fill="none" stroke="#4f4f4f" stroke-width="1.100"/><rect x="3" y="8.500" width="4.500" height="3.500" fill="none" stroke="#4f4f4f" stroke-width="1.100"/></svg>
<svg style="left:350.4px;top:338.0px" width="6" height="4" viewBox="0 0 6 4"><path d="M1 1 L3.0 2.8 L5 1" fill="none" stroke="#333" stroke-width="1.4"/></svg>
<svg style="left:370.5px;top:330.3px" width="18" height="17" viewBox="0 0 18 17"><path d="M5 3.500 H1.500 V16 H15.500 V3.500 H12" fill="none" stroke="#4f4f4f" stroke-width="1.300"/><path d="M5.500 1 L8.500 4.500 L11.500 1" fill="none" stroke="#4f4f4f" stroke-width="1.300"/><path d="M4 8.500 H13 M4 12 H13" stroke="#4f4f4f" stroke-width="1.200"/></svg>
<svg style="left:393.0px;top:338.0px" width="6" height="4" viewBox="0 0 6 4"><path d="M1 1 L3.0 2.8 L5 1" fill="none" stroke="#333" stroke-width="1.4"/></svg>
<div class="abs" style="left:423.7px;top:299px;width:152.3px;height:22px;background:#f5f5f5;border-radius:3px 0 0 3px"></div>
<div class="abs" style="left:577.7px;top:299px;width:60.3px;height:22px;background:#f5f5f5;border-radius:0 3px 3px 0"></div>
<svg style="left:563.8px;top:308.2px" width="6.5" height="4.5" viewBox="0 0 6.5 4.5"><path d="M1 1 L3.25 3.3 L5.5 1" fill="none" stroke="#dcdcdc" stroke-width="1.4"/></svg>
<svg style="left:624.8px;top:308.2px" width="6.5" height="4.5" viewBox="0 0 6.5 4.5"><path d="M1 1 L3.25 3.3 L5.5 1" fill="none" stroke="#dcdcdc" stroke-width="1.4"/></svg>
<div class="abs" style="left:641px;top:302px;width:30px;height:20px;line-height:20px;text-align:center;font-size:14px;color:#bababa;font-weight:normal;">A</div>
<svg style="left:661.0px;top:302.5px" width="6" height="6" viewBox="0 0 7 7"><path d="M3.500 0 V7 M0 3.500 H7" stroke="#bababa" stroke-width="1"/></svg>
<div class="abs" style="left:669px;top:302px;width:30px;height:20px;line-height:20px;text-align:center;font-size:14px;color:#bababa;font-weight:normal;">A</div>
<svg style="left:689.0px;top:303.0px" width="6" height="2" viewBox="0 0 7 2"><path d="M0 1 H7" stroke="#bababa" stroke-width="1"/></svg>
<svg style="left:704.6px;top:303.0px" width="18" height="16" viewBox="0 0 18 16"><path d="M8 1.500 L15.500 7.500 L9.500 13 H5.500 L2 10z M5 6.500 L11.500 11.500" fill="none" stroke="#bababa" stroke-width="1.200" stroke-linejoin="round"/><path d="M3 15.300 H17" stroke="#bababa" stroke-width="1.100"/></svg>
<div class="abs" style="left:419.7px;top:329.5px;width:30px;height:20px;line-height:20px;text-align:center;font-size:13.5px;color:#bababa;font-weight:bold;">B</div>
<div class="abs" style="left:446.7px;top:329.5px;width:30px;height:20px;line-height:20px;text-align:center;font-size:13.5px;color:#bababa;font-weight:normal;font-style:italic">I</div>
<div class="abs" style="left:476.3px;top:328.5px;width:30px;height:20px;line-height:20px;text-align:center;font-size:13px;color:#bababa;font-weight:normal;">U</div>
<svg style="left:486.3px;top:346.9px" width="10" height="1.2" viewBox="0 0 10 1.2"><rect width="10" height="1.200" fill="#bababa"/></svg>
<div class="abs" style="left:505px;top:329.5px;width:30px;height:20px;line-height:20px;text-align:center;font-size:13px;color:#bababa;font-weight:normal;">A</div>
<svg style="left:513.0px;top:339.9px" width="14" height="1.2" viewBox="0 0 14 1.2"><rect width="14" height="1.200" fill="#bababa"/></svg>
<div class="abs" style="left:532.5px;top:329.5px;width:30px;height:20px;line-height:20px;text-align:center;font-size:14px;color:#bababa;font-weight:normal;">S</div>
<div class="abs" style="left:561.5px;top:329.5px;width:30px;height:20px;line-height:20px;text-align:center;font-size:13.5px;color:#bababa;font-weight:normal;">X</div>
<div class="abs" style="left:569px;top:325.5px;width:30px;height:20px;line-height:20px;text-align:center;font-size:7.5px;color:#bababa;font-weight:bold;">2</div>
<svg style="left:592.6px;top:338.5px" width="6" height="4" viewBox="0 0 6 4"><path d="M1 1 L3.0 2.8 L5 1" fill="none" stroke="#bababa" stroke-width="1.4"/></svg>
<div class="abs" style="left:603.5px;top:327.5px;width:30px;height:20px;line-height:20px;text-align:center;font-size:13px;color:#bababa;font-weight:normal;">A</div>
<div class="abs" style="left:611px;top:343.5px;width:15.5px;height:3px;background:#a5a5a5;"></div>
<svg style="left:632.0px;top:338.5px" width="6" height="4" viewBox="0 0 6 4"><path d="M1 1 L3.0 2.8 L5 1" fill="none" stroke="#bababa" stroke-width="1.4"/></svg>
<svg style="left:650.3px;top:330.0px" width="18" height="16" viewBox="0 0 18 16"><path d="M3 10.500 L9 2.500 L11.500 4.500 L6 11.500z M9.500 6.500 L15 1.500" fill="none" stroke="#bababa" stroke-width="1.200" stroke-linejoin="round"/></svg>
<div class="abs" style="left:652.5px;top:343.5px;width:14px;height:3.5px;background:#e2e2e2;border-radius:1px"></div>
<svg style="left:672.3px;top:338.5px" width="6" height="4" viewBox="0 0 6 4"><path d="M1 1 L3.0 2.8 L5 1" fill="none" stroke="#bababa" stroke-width="1.4"/></svg>
<svg style="left:749.5px;top:304.0px" width="16" height="14" viewBox="0 0 16 14"><path d="M5 2 H16" stroke="#bababa" stroke-width="1.200"/><path d="M5 7 H16" stroke="#bababa" stroke-width="1.200"/><path d="M5 12 H16" stroke="#bababa" stroke-width="1.200"/><circle cx="1.500" cy="2" r="1.100" fill="#bababa"/><circle cx="1.500" cy="7" r="1.100" fill="#bababa"/><circle cx="1.500" cy="12" r="1.100" fill="#bababa"/></svg>
<svg style="left:770.3px;top:310.0px" width="6" height="4" viewBox="0 0 6 4"><path d="M1 1 L3.0 2.8 L5 1" fill="none" stroke="#bababa" stroke-width="1.4"/></svg>
<svg style="left:790.0px;top:304.0px" width="16" height="14" viewBox="0 0 16 14"><path d="M5.5 2 H16" stroke="#bababa" stroke-width="1.200"/><path d="M5.5 7 H16" stroke="#bababa" stroke-width="1.200"/><path d="M5.5 12 H16" stroke="#bababa" stroke-width="1.200"/><path d="M1 .5 H2.200 V3.500 M.8 5.800 H2.500 V7 H.8 V8.300 H2.500 M.8 10.500 H2.500 V13.500 H.8 M1.200 12 H2.500" fill="none" stroke="#bababa" stroke-width=".9"/></svg>
<svg style="left:811.0px;top:310.0px" width="6" height="4" viewBox="0 0 6 4"><path d="M1 1 L3.0 2.8 L5 1" fill="none" stroke="#bababa" stroke-width="1.4"/></svg>
<svg style="left:831.7px;top:304.5px" width="16" height="13" viewBox="0 0 16 13"><path d="M1 1 H15" stroke="#bababa" stroke-width="1.200"/><path d="M7 6.5 H15" stroke="#bababa" stroke-width="1.200"/><path d="M1 12 H15" stroke="#bababa" stroke-width="1.200"/><path d="M4.500 4 L1.500 6.500 L4.500 9 M1.800 6.500 H6" fill="none" stroke="#bababa" stroke-width="1.100"/></svg>
<svg style="left:860.0px;top:304.5px" width="16" height="13" viewBox="0 0 16 13"><path d="M1 1 H15" stroke="#bababa" stroke-width="1.200"/><path d="M9 6.5 H15" stroke="#bababa" stroke-width="1.200"/><path d="M1 12 H15" stroke="#bababa" stroke-width="1.200"/><path d="M4 4 L7 6.500 L4 9 M1 6.500 H6.800" fill="none" stroke="#bababa" stroke-width="1.100"/></svg>
<div class="abs" style="left:891px;top:300px;width:1px;height:20px;background:#e3e3e3;"></div>
<div class="abs" style="left:899.8px;top:302px;width:30px;height:20px;line-height:20px;text-align:center;font-size:13px;color:#bababa;font-weight:normal;">ab</div>
<svg style="left:907.8px;top:302.9px" width="14" height="1.2" viewBox="0 0 14 1.2"><rect width="14" height="1.200" fill="#bababa"/></svg>
<svg style="left:907.8px;top:318.9px" width="14" height="1.2" viewBox="0 0 14 1.2"><rect width="14" height="1.200" fill="#bababa"/></svg>
<svg style="left:927.8px;top:310.0px" width="6" height="4" viewBox="0 0 6 4"><path d="M1 1 L3.0 2.8 L5 1" fill="none" stroke="#bababa" stroke-width="1.4"/></svg>
<div class="abs" style="left:943.5px;top:300.5px;width:30px;height:20px;line-height:20px;text-align:center;font-size:13px;color:#bababa;font-weight:normal;">A</div>
<svg style="left:945.0px;top:303.5px" width="8" height="16" viewBox="0 0 8 16"><path d="M4 0 V15 M1 12 L4 15.300 L7 12" fill="none" stroke="#bababa" stroke-width="1.100"/></svg>
<svg style="left:956.0px;top:316.0px" width="6" height="4" viewBox="0 0 6 4"><path d="M.5 .5 L3 3.200 L5.500 .5" fill="none" stroke="#bababa" stroke-width="1"/></svg>
<svg style="left:968.5px;top:310.0px" width="6" height="4" viewBox="0 0 6 4"><path d="M1 1 L3.0 2.8 L5 1" fill="none" stroke="#bababa" stroke-width="1.4"/></svg>
<svg style="left:747.0px;top:333.0px" width="16" height="13" viewBox="0 0 16 13"><path d="M1 1.5 H15" stroke="#bababa" stroke-width="1.200"/><path d="M1 6.5 H10" stroke="#bababa" stroke-width="1.200"/><path d="M1 11.5 H15" stroke="#bababa" stroke-width="1.200"/></svg>
<svg style="left:775.3px;top:333.0px" width="16" height="13" viewBox="0 0 16 13"><path d="M1 1.5 H15" stroke="#bababa" stroke-width="1.200"/><path d="M4 6.5 H12" stroke="#bababa" stroke-width="1.200"/><path d="M1 11.5 H15" stroke="#bababa" stroke-width="1.200"/></svg>
<svg style="left:803.6px;top:333.0px" width="16" height="13" viewBox="0 0 16 13"><path d="M1 1.5 H15" stroke="#bababa" stroke-width="1.200"/><path d="M6 6.5 H15" stroke="#bababa" stroke-width="1.200"/><path d="M1 11.5 H15" stroke="#bababa" stroke-width="1.200"/></svg>
<svg style="left:832.0px;top:333.0px" width="16" height="13" viewBox="0 0 16 13"><path d="M1 1.5 H15" stroke="#bababa" stroke-width="1.200"/><path d="M1 6.5 H15" stroke="#bababa" stroke-width="1.200"/><path d="M1 11.5 H15" stroke="#bababa" stroke-width="1.200"/></svg>
<svg style="left:859.4px;top:331.5px" width="18" height="16" viewBox="0 0 18 16"><path d="M1 0 V16 M17 0 V16 M4 8.500 H14 M4 13 H14" stroke="#bababa" stroke-width="1.200"/><path d="M7 1.500 L5 3.200 L7 5 M11 1.500 L13 3.200 L11 5" fill="none" stroke="#bababa" stroke-width="1"/></svg>
<svg style="left:888.7px;top:331.5px" width="16" height="16" viewBox="0 0 16 16"><path d="M7 2 H16 M7 8 H16 M7 14 H16" stroke="#bababa" stroke-width="1.200"/><path d="M3 1 V15 M.8 3.500 L3 1 L5.200 3.500 M.8 12.500 L3 15 L5.200 12.500" fill="none" stroke="#bababa" stroke-width="1.100"/></svg>
<svg style="left:917.4px;top:331.5px" width="16" height="16" viewBox="0 0 16 16"><path d="M7 2 H16 M7 8 H16 M7 14 H16" stroke="#bababa" stroke-width="1.200"/><path d="M3 1 V6 M.8 3.800 L3 6.200 L5.200 3.800 M3 15 V10 M.8 12.200 L3 9.800 L5.200 12.200" fill="none" stroke="#bababa" stroke-width="1.100"/></svg>
<svg style="left:947.0px;top:331.5px" width="16" height="16" viewBox="0 0 16 16"><path d="M7 2 H16 M7 8 H16 M7 14 H16" stroke="#bababa" stroke-width="1.200"/><path d="M3 1 V15 M.8 1 H5.200 M.8 15 H5.200" fill="none" stroke="#bababa" stroke-width="1.100"/></svg>
<svg style="left:968.5px;top:338.5px" width="6" height="4" viewBox="0 0 6 4"><path d="M1 1 L3.0 2.8 L5 1" fill="none" stroke="#bababa" stroke-width="1.4"/></svg>
<svg style="left:988.0px;top:330.5px" width="16" height="18" viewBox="0 0 16 18"><path d="M3.500 2 H1 V16 H3.500 M12.500 2 H15 V16 H12.500" fill="none" stroke="#bababa" stroke-width="1.200"/><path d="M4.500 7.500 H11.500 M4.500 10.500 H11.500" stroke="#bababa" stroke-width="1.100"/><path d="M5.500 4.500 L8 2 L10.500 4.500 M5.500 13.500 L8 16 L10.500 13.500" fill="none" stroke="#bababa" stroke-width="1.100"/></svg>
<svg style="left:1009.0px;top:338.5px" width="6" height="4" viewBox="0 0 6 4"><path d="M1 1 L3.0 2.8 L5 1" fill="none" stroke="#bababa" stroke-width="1.4"/></svg>
<svg style="left:1062.4px;top:305.0px" width="22" height="22" viewBox="0 0 22 22"><path d="M14.500 8 V1.500 H1.500 V13.500 H8" fill="none" stroke="#4f4f4f" stroke-width="1.300"/><circle cx="14.500" cy="14.500" r="6" fill="none" stroke="#4f4f4f" stroke-width="1.300"/><path d="M9 13 L14 7.800 V13z" fill="none" stroke="#e0864e" stroke-width="1.100"/></svg>
<div class="abs" style="left:1047.0px;top:330.3px;font-size:13.5px;font-weight:normal;color:#333;line-height:18px;white-space:nowrap;transform:scaleX(0.8823);transform-origin:0 50%;-webkit-text-stroke:.25px #333;">Drawing</div>
<svg style="left:1094.0px;top:338.0px" width="6" height="4" viewBox="0 0 6 4"><path d="M1 1 L3.0 2.8 L5 1" fill="none" stroke="#333" stroke-width="1.4"/></svg>
<svg style="left:1134.2px;top:305.0px" width="22" height="22" viewBox="0 0 22 22"><circle cx="8.500" cy="8.500" r="7" fill="none" stroke="#4f4f4f" stroke-width="1.300"/><path d="M13.500 13.500 L21 21" stroke="#4f4f4f" stroke-width="1.400"/></svg>
<div class="abs" style="left:1128.7px;top:330.3px;font-size:13.5px;font-weight:normal;color:#333;line-height:18px;white-space:nowrap;transform:scaleX(0.8642);transform-origin:0 50%;-webkit-text-stroke:.25px #333;">Find</div>
<svg style="left:1154.6px;top:338.0px" width="6" height="4" viewBox="0 0 6 4"><path d="M1 1 L3.0 2.8 L5 1" fill="none" stroke="#333" stroke-width="1.4"/></svg>
<svg style="left:1214.2px;top:306.0px" width="24" height="20" viewBox="0 0 24 20"><path d="M1 6.500 L12 1.500 L23 6.500 L12 11.500z" fill="none" stroke="#4f4f4f" stroke-width="1.300" stroke-linejoin="round"/><path d="M5.500 9 V15 Q12 19.500 18.500 15 V9" fill="none" stroke="#4f4f4f" stroke-width="1.300"/><path d="M21.500 7.500 V14" stroke="#4f4f4f" stroke-width="1.300"/><circle cx="21.500" cy="15" r="1" fill="#4f4f4f"/></svg>
<div class="abs" style="left:1190.3px;top:330.3px;font-size:13.5px;font-weight:normal;color:#333;line-height:18px;white-space:nowrap;transform:scaleX(0.8889);transform-origin:0 50%;-webkit-text-stroke:.25px #333;">Student Tools</div>
<svg style="left:1304.5px;top:304.0px" width="24" height="24" viewBox="0 0 24 24"><path d="M3 23 H.8 V.8 H23.200 V23 H21" fill="none" stroke="#8a8a8a" stroke-width="1"/><rect x="4.500" y="4.500" width="6" height="5" fill="none" stroke="#c5c5c5" stroke-width="1"/><rect x="13.500" y="4.500" width="6" height="5" fill="none" stroke="#c5c5c5" stroke-width="1"/><path d="M8.500 11.500 Q11.500 10.300 13 13 L18.500 20 Q17.800 22 16 21.500 L10.800 15 Q8 15.500 7 13 L9.300 14 L10.500 12.800z" fill="#1f1f1f"/></svg>
<div class="abs" style="left:1290.5px;top:330.3px;font-size:13.5px;font-weight:normal;color:#333;line-height:18px;white-space:nowrap;transform:scaleX(0.8548);transform-origin:0 50%;-webkit-text-stroke:.25px #333;">Settings</div>
<svg style="left:1335.3px;top:338.0px" width="6" height="4" viewBox="0 0 6 4"><path d="M1 1 L3.0 2.8 L5 1" fill="none" stroke="#333" stroke-width="1.4"/></svg>
<div class="abs" style="left:260px;top:372px;width:1px;height:544px;background:#e2e2e2;"></div>
<div class="abs" style="left:91.6px;top:385.0px;font-size:13.5px;font-weight:normal;color:#2f2f2f;line-height:18px;white-space:nowrap;transform:scaleX(0.9350);transform-origin:0 50%;">Outline</div>
<div class="abs" style="left:143.4px;top:385.0px;font-size:13.5px;font-weight:normal;color:#d4511a;line-height:18px;white-space:nowrap;transform:scaleX(0.8265);transform-origin:0 50%;">Slides</div>
<div class="abs" style="left:145.6px;top:404px;width:25.4px;height:2px;background:#d4511a;border-radius:1px"></div>
<svg style="left:230.5px;top:388.0px" width="7" height="12" viewBox="0 0 7 12"><path d="M6 1 L1 6 L6 11" fill="none" stroke="#4a4a4a" stroke-width="1.300"/></svg>
<div class="abs" style="left:38px;top:430px;width:14px;text-align:center;font-size:13.500px;line-height:18px;color:#2f2f2f">4</div>
<div class="abs" style="left:38px;top:539px;width:14px;text-align:center;font-size:13.500px;line-height:18px;color:#2f2f2f">5</div>
<div class="abs" style="left:38px;top:649px;width:14px;text-align:center;font-size:13.500px;line-height:18px;color:#d4511a">6</div>
<div class="abs" style="left:38px;top:758px;width:14px;text-align:center;font-size:13.500px;line-height:18px;color:#2f2f2f">7</div>
<div class="abs" style="left:61px;top:427px;width:166.500px;height:93px;background:#fff;overflow:hidden;box-shadow:0 0 2.500px rgba(0,0,0,.16);"><div style="position:absolute;left:0;top:0;width:825.500px;height:464px;transform:scale(0.20170);transform-origin:0 0"><div class="abs" style="left:87px;top:104px;width:625px;text-align:center;white-space:nowrap;font-size:32px;line-height:40px;color:#555"><span style="display:inline-block;transform:scaleX(0.9396)">What Devices in a Computer Use a Heat Sink?</span></div><div class="abs sl" style="left:76.0px;top:191.7px;font-size:21px;line-height:26px;letter-spacing:0.885px;color:#333">&bull; The components that generate the most heat in your computer are</div><div class="abs sl" style="left:88.0px;top:218.0px;font-size:21px;line-height:26px;letter-spacing:0.760px;color:#333">the <span class="lk">CPU</span> (Central Processing Unit), <span class="lk">video card</span>(if your computer has</div><div class="abs sl" style="left:88.0px;top:244.3px;font-size:21px;line-height:26px;letter-spacing:0.294px;color:#333">one), and the <span class="lk">power supply</span>. They always have some cooling, usually a</div><div class="abs sl" style="left:88.0px;top:270.6px;font-size:21px;line-height:26px;letter-spacing:0.861px;color:#333">fan. Other components that may have a heat sink include the <span class="lk">north</span></div><div class="abs sl" style="left:88.0px;top:296.9px;font-size:21px;line-height:26px;letter-spacing:1.052px;color:#333"><span class="lk">bridge</span>, <span class="lk">south bridge</span>, and <span class="lk">memory</span>.</div></div></div>
<div class="abs" style="left:61px;top:536.4px;width:166.500px;height:93.6px;background:#fff;overflow:hidden;box-shadow:0 0 2.500px rgba(0,0,0,.16);"><div style="position:absolute;left:0;top:0;width:825.500px;height:464px;transform:scale(0.20170);transform-origin:0 0"><div class="abs" style="left:230px;top:46px;width:366px;text-align:center;white-space:nowrap;font-size:33px;line-height:40px;color:#333;font-weight:bold"><span style="display:inline-block;transform:scaleX(.93)">Northbridge</span></div><div class="abs sl" style="left:66.0px;top:125.7px;font-size:20.5px;line-height:26px;letter-spacing:2.752px;color:#444">&bull; Alternatively called the <b>PAC</b> (PCI/AGP Controller) and <b>nb</b>,</div><div class="abs sl" style="left:80.0px;top:152.5px;font-size:20.5px;line-height:26px;letter-spacing:3.427px;color:#444">the <b>northbridge</b> is an <span class="lk">integrated circuit</span> responsible for</div><div class="abs sl" style="left:80.0px;top:179.3px;font-size:20.5px;line-height:26px;letter-spacing:2.618px;color:#444">communications between the <span class="lk">CPU</span> (central processing unit)</div><div class="abs sl" style="left:80.0px;top:205.5px;font-size:20.5px;line-height:26px;letter-spacing:1.158px;color:#444">interface, <span class="lk">AGP</span> (accelerated graphics port), and the <span class="lk">memory</span>. Unlike</div><div class="abs sl" style="left:80.0px;top:230.3px;font-size:20.5px;line-height:26px;letter-spacing:1.973px;color:#444">the southbridge, the northbridge is directly connected to these</div><div class="abs sl" style="left:80.0px;top:256.6px;font-size:20.5px;line-height:26px;letter-spacing:2.347px;color:#444">components. It acts as a &quot;bridge&quot; for the southbridge chip to</div><div class="abs sl" style="left:80.0px;top:282.4px;font-size:20.5px;line-height:26px;letter-spacing:1.699px;color:#444">communicate with the CPU, <span class="lk">RAM</span> (random access memory), and</div><div class="abs sl" style="left:80.0px;top:308.7px;font-size:20.5px;line-height:26px;letter-spacing:-0.898px;color:#444">graphics controller.</div><div class="abs sl" style="left:66.0px;top:341.9px;font-size:20.5px;line-height:26px;letter-spacing:0.990px;color:#444">&bull; The northbridge is usually slightly larger than the southbridge and is</div><div class="abs sl" style="left:80.0px;top:368.2px;font-size:20.5px;line-height:26px;letter-spacing:-1.246px;color:#444">positioned closer to the CPU and memory.</div></div></div>
<div class="abs" style="left:59.700px;top:644.2px;width:169.300px;height:97.5px;border:2px solid #c2581f;border-radius:4px;background:#fff6ef"></div>
<div class="abs" style="left:61px;top:645.5px;width:166.500px;height:94.5px;background:#fff;overflow:hidden;"><div style="position:absolute;left:0;top:0;width:825.500px;height:464px;transform:scale(0.20170);transform-origin:0 0"><div class="abs" style="left:319.5px;top:26.9px;font-size:33.500px;line-height:40px;color:#111;white-space:nowrap;transform:scaleX(1.0350);transform-origin:0 50%">Southbridge</div><div class="abs sl" style="left:64.3px;top:127.0px;font-size:20.4px;line-height:26px;letter-spacing:5.913px;color:#1c1c1c">The <b><span style="letter-spacing:5.363px">southbridge</span></b> is an <span class="lk"><span style="letter-spacing:4.413px">IC</span></span> (integrated circuit) on</div><div class="abs sl" style="left:63.3px;top:153.0px;font-size:20.4px;line-height:26px;letter-spacing:2.527px;color:#1c1c1c">the <span class="lk">motherboard</span> responsible for the <span class="lk">hard drive</span> controller, I/O</div><div class="abs sl" style="left:63.3px;top:179.0px;font-size:20.4px;line-height:26px;letter-spacing:1.322px;color:#1c1c1c">controller and integrated hardware. Integrated hardware can include</div><div class="abs sl" style="left:63.3px;top:204.9px;font-size:20.4px;line-height:26px;letter-spacing:1.275px;color:#1c1c1c">the <span class="lk">sound card</span> and <span class="lk">video card</span> if on the motherboard, <span class="lk"><span style="letter-spacing:-0.325px">USB</span></span> (universal</div><div class="abs sl" style="left:63.3px;top:230.8px;font-size:20.4px;line-height:26px;letter-spacing:1.218px;color:#1c1c1c">serial bus), <span class="lk"><span style="letter-spacing:-0.082px">PCI</span></span>, <span class="lk"><span style="letter-spacing:0.118px">ISA</span></span> (Industry Standard Architecture), <span class="lk"><span style="letter-spacing:0.518px">IDE</span></span> (integrated</div><div class="abs sl" style="left:63.3px;top:256.8px;font-size:20.4px;line-height:26px;letter-spacing:0.832px;color:#1c1c1c">drive electronics), <span class="lk"><span style="letter-spacing:-0.468px">BIOS</span></span> (basic input/output system), and <span class="lk">Ethernet</span>.</div></div></div>
<div class="abs" style="left:61px;top:755.2px;width:166.500px;height:93px;background:#fff;overflow:hidden;box-shadow:0 0 2.500px rgba(0,0,0,.16);"><div style="position:absolute;left:0;top:0;width:825.500px;height:464px;transform:scale(0.20170);transform-origin:0 0"><div class="abs" style="left:289px;top:31px;width:246px;text-align:center;white-space:nowrap;font-size:31px;line-height:40px;color:#595959"><span style="display:inline-block;transform:scaleX(.93)">MOTHERBOARD</span></div><div class="abs" style="left:232px;top:152px;width:404px;height:237px;background:#6e2a2e"></div><div class="abs" style="left:240px;top:160px;width:60px;height:120px;background:#8a3a3e"></div><div class="abs" style="left:310px;top:158px;width:14px;height:150px;background:#d9d2cf"></div><div class="abs" style="left:335px;top:158px;width:14px;height:150px;background:#d9d2cf"></div><div class="abs" style="left:360px;top:158px;width:14px;height:150px;background:#c9c2bf"></div><div class="abs" style="left:385px;top:158px;width:10px;height:150px;background:#4a2a2c"></div><div class="abs" style="left:400px;top:160px;width:35px;height:60px;background:#5a5a5e"></div><div class="abs" style="left:445px;top:160px;width:60px;height:30px;background:#b9b3b0"></div><div class="abs" style="left:520px;top:165px;width:70px;height:60px;background:#7a7578"></div><div class="abs" style="left:530px;top:175px;width:50px;height:42px;background:#94908f"></div><div class="abs" style="left:545px;top:160px;width:40px;height:14px;background:#e9c84a"></div><div class="abs" style="left:600px;top:160px;width:30px;height:100px;background:#7d3236"></div><div class="abs" style="left:430px;top:238px;width:50px;height:50px;background:#2a2426"></div><div class="abs" style="left:330px;top:300px;width:50px;height:40px;background:#2a2426"></div><div class="abs" style="left:420px;top:312px;width:200px;height:14px;background:#d8c23a"></div><div class="abs" style="left:420px;top:332px;width:200px;height:14px;background:#cdb733"></div><div class="abs" style="left:420px;top:352px;width:200px;height:12px;background:#2a2a2e"></div><div class="abs" style="left:500px;top:370px;width:100px;height:12px;background:#2b4aa0"></div><div class="abs" style="left:240px;top:300px;width:40px;height:70px;background:#a8484c"></div><div class="abs" style="left:290px;top:320px;width:30px;height:60px;background:#8f3a3f"></div><div class="abs" style="left:420px;top:365px;width:60px;height:20px;background:#bdb7b4"></div><div class="abs" style="left:600px;top:280px;width:32px;height:90px;background:#5e2226"></div><div class="abs" style="left:157px;top:150px;width:68px;height:5px;background:#b9b9b9"></div><div class="abs" style="left:215px;top:153px;width:18px;height:2px;background:#d33"></div><div class="abs" style="left:652px;top:144px;width:62px;height:5px;background:#b9b9b9"></div><div class="abs" style="left:636px;top:147px;width:14px;height:2px;background:#d33"></div><div class="abs" style="left:154px;top:171px;width:61px;height:5px;background:#b9b9b9"></div><div class="abs" style="left:215px;top:174px;width:18px;height:2px;background:#d33"></div><div class="abs" style="left:652px;top:165px;width:74px;height:5px;background:#b9b9b9"></div><div class="abs" style="left:636px;top:168px;width:14px;height:2px;background:#d33"></div><div class="abs" style="left:169px;top:192px;width:65px;height:5px;background:#b9b9b9"></div><div class="abs" style="left:215px;top:195px;width:18px;height:2px;background:#d33"></div><div class="abs" style="left:652px;top:186px;width:65px;height:5px;background:#b9b9b9"></div><div class="abs" style="left:636px;top:189px;width:14px;height:2px;background:#d33"></div><div class="abs" style="left:168px;top:213px;width:52px;height:5px;background:#b9b9b9"></div><div class="abs" style="left:215px;top:216px;width:18px;height:2px;background:#d33"></div><div class="abs" style="left:652px;top:207px;width:64px;height:5px;background:#b9b9b9"></div><div class="abs" style="left:636px;top:210px;width:14px;height:2px;background:#d33"></div><div class="abs" style="left:150px;top:234px;width:65px;height:5px;background:#b9b9b9"></div><div class="abs" style="left:215px;top:237px;width:18px;height:2px;background:#d33"></div><div class="abs" style="left:652px;top:228px;width:53px;height:5px;background:#b9b9b9"></div><div class="abs" style="left:636px;top:231px;width:14px;height:2px;background:#d33"></div><div class="abs" style="left:167px;top:255px;width:57px;height:5px;background:#b9b9b9"></div><div class="abs" style="left:215px;top:258px;width:18px;height:2px;background:#d33"></div><div class="abs" style="left:652px;top:249px;width:51px;height:5px;background:#b9b9b9"></div><div class="abs" style="left:636px;top:252px;width:14px;height:2px;background:#d33"></div><div class="abs" style="left:172px;top:276px;width:65px;height:5px;background:#b9b9b9"></div><div class="abs" style="left:215px;top:279px;width:18px;height:2px;background:#d33"></div><div class="abs" style="left:652px;top:270px;width:62px;height:5px;background:#b9b9b9"></div><div class="abs" style="left:636px;top:273px;width:14px;height:2px;background:#d33"></div><div class="abs" style="left:176px;top:297px;width:67px;height:5px;background:#b9b9b9"></div><div class="abs" style="left:215px;top:300px;width:18px;height:2px;background:#d33"></div><div class="abs" style="left:652px;top:291px;width:60px;height:5px;background:#b9b9b9"></div><div class="abs" style="left:636px;top:294px;width:14px;height:2px;background:#d33"></div><div class="abs" style="left:162px;top:318px;width:70px;height:5px;background:#b9b9b9"></div><div class="abs" style="left:215px;top:321px;width:18px;height:2px;background:#d33"></div><div class="abs" style="left:652px;top:312px;width:72px;height:5px;background:#b9b9b9"></div><div class="abs" style="left:636px;top:315px;width:14px;height:2px;background:#d33"></div><div class="abs" style="left:154px;top:339px;width:57px;height:5px;background:#b9b9b9"></div><div class="abs" style="left:215px;top:342px;width:18px;height:2px;background:#d33"></div><div class="abs" style="left:652px;top:333px;width:65px;height:5px;background:#b9b9b9"></div><div class="abs" style="left:636px;top:336px;width:14px;height:2px;background:#d33"></div><div class="abs" style="left:154px;top:360px;width:66px;height:5px;background:#b9b9b9"></div><div class="abs" style="left:215px;top:363px;width:18px;height:2px;background:#d33"></div><div class="abs" style="left:652px;top:354px;width:57px;height:5px;background:#b9b9b9"></div><div class="abs" style="left:636px;top:357px;width:14px;height:2px;background:#d33"></div><div class="abs" style="left:190px;top:404px;width:40px;height:5px;background:#b9b9b9"></div><div class="abs" style="left:210px;top:390px;width:2px;height:12px;background:#d33"></div><div class="abs" style="left:255px;top:406px;width:56px;height:5px;background:#b9b9b9"></div><div class="abs" style="left:275px;top:390px;width:2px;height:12px;background:#d33"></div><div class="abs" style="left:300px;top:404px;width:47px;height:5px;background:#b9b9b9"></div><div class="abs" style="left:320px;top:390px;width:2px;height:12px;background:#d33"></div><div class="abs" style="left:360px;top:404px;width:46px;height:5px;background:#b9b9b9"></div><div class="abs" style="left:380px;top:390px;width:2px;height:12px;background:#d33"></div><div class="abs" style="left:420px;top:411px;width:57px;height:5px;background:#b9b9b9"></div><div class="abs" style="left:440px;top:390px;width:2px;height:12px;background:#d33"></div><div class="abs" style="left:480px;top:410px;width:51px;height:5px;background:#b9b9b9"></div><div class="abs" style="left:500px;top:390px;width:2px;height:12px;background:#d33"></div><div class="abs" style="left:545px;top:410px;width:56px;height:5px;background:#b9b9b9"></div><div class="abs" style="left:565px;top:390px;width:2px;height:12px;background:#d33"></div><div class="abs" style="left:600px;top:411px;width:42px;height:5px;background:#b9b9b9"></div><div class="abs" style="left:620px;top:390px;width:2px;height:12px;background:#d33"></div><div class="abs" style="left:300px;top:127px;width:39px;height:5px;background:#b9b9b9"></div><div class="abs" style="left:318px;top:138px;width:2px;height:14px;background:#d33"></div><div class="abs" style="left:350px;top:122px;width:40px;height:5px;background:#b9b9b9"></div><div class="abs" style="left:368px;top:138px;width:2px;height:14px;background:#d33"></div><div class="abs" style="left:400px;top:129px;width:42px;height:5px;background:#b9b9b9"></div><div class="abs" style="left:418px;top:138px;width:2px;height:14px;background:#d33"></div><div class="abs" style="left:440px;top:126px;width:66px;height:5px;background:#b9b9b9"></div><div class="abs" style="left:458px;top:138px;width:2px;height:14px;background:#d33"></div><div class="abs" style="left:500px;top:132px;width:49px;height:5px;background:#b9b9b9"></div><div class="abs" style="left:518px;top:138px;width:2px;height:14px;background:#d33"></div><div class="abs" style="left:560px;top:132px;width:63px;height:5px;background:#b9b9b9"></div><div class="abs" style="left:578px;top:138px;width:2px;height:14px;background:#d33"></div><div class="abs" style="left:450px;top:420px;width:270px;height:7px;background:#6fa8dc"></div></div></div>
<div class="abs" style="left:61px;top:864.5px;width:166.5px;height:2.5px;background:#fafafa;box-shadow:0 0 2px rgba(0,0,0,.12)"></div>
<div class="abs" style="left:40px;top:867.2px;width:215px;height:48px;background:#efefef;"></div>
<svg style="left:130.0px;top:879.5px" width="14" height="14" viewBox="0 0 14 14"><path d="M7 0 V14 M0 7 H14" stroke="#2f2f2f" stroke-width="1.500"/></svg>
<div class="abs" style="left:247.7px;top:592px;width:4.6px;height:224px;background:#c9c9c9;border-radius:2.300px"></div>
<svg style="left:827.0px;top:599.0px" width="10" height="22" viewBox="0 0 9 19"><path d="M1 1 Q4.500 1 4.500 3.500 Q4.500 1 8 1 M4.500 3 V16 M1 18 Q4.500 18 4.500 15.500 Q4.500 18 8 18" fill="none" stroke="#fff" stroke-width="2.600"/><path d="M1 1 Q4.500 1 4.500 3.500 Q4.500 1 8 1 M4.500 3 V16 M1 18 Q4.500 18 4.500 15.500 Q4.500 18 8 18" fill="none" stroke="#222" stroke-width="1.100"/></svg>
<svg style="left:1383.5px;top:375.2px" width="6" height="4.5" viewBox="0 0 7 5"><path d="M0 5 L3.500 0 L7 5z" fill="#8a8a8a"/></svg>
<div class="abs" style="left:1384px;top:662.5px;width:6px;height:53px;background:#d0d0d0;border-radius:3px"></div>
<svg style="left:1384.0px;top:835.8px" width="6" height="4.5" viewBox="0 0 7 5"><path d="M0 0 L3.500 5 L7 0z" fill="#8a8a8a"/></svg>
<svg style="left:1384.0px;top:850.5px" width="6" height="8" viewBox="0 0 7 9"><path d="M0 4 L3.500 0 L7 4z M0 9 L3.500 5 L7 9z" fill="#8a8a8a"/></svg>
<svg style="left:1384.0px;top:865.8px" width="6" height="8" viewBox="0 0 7 9"><path d="M0 0 L3.500 4 L7 0z M0 5 L3.500 9 L7 5z" fill="#8a8a8a"/></svg>
<div class="abs" style="left:261px;top:882.5px;width:1133px;height:1px;background:#dddddd;"></div>
<div class="abs" style="left:272.8px;top:888.0px;font-size:14px;font-weight:normal;color:#8e8e8e;line-height:18px;white-space:nowrap;transform:scaleX(0.9542);transform-origin:0 50%;">Click to add notes</div>
<div class="abs" style="left:16px;top:916px;width:1378px;height:1px;background:#e0e0e0;"></div>
<div class="abs" style="left:28.0px;top:920.0px;font-size:13px;font-weight:normal;color:#2f2f2f;line-height:17px;white-space:nowrap;transform:scaleX(0.8992);transform-origin:0 50%;">Slide 6 / 8</div>
<div class="abs" style="left:89px;top:920px;width:1px;height:16px;background:#dedede;"></div>
<svg style="left:104.0px;top:921.5px" width="14" height="14" viewBox="0 0 14 14"><path d="M1 1.500 H6 V5 H4.500 V8.500 H2.500 V5 H1z" fill="none" stroke="#3a3a3a" stroke-width="1.100"/><path d="M9 2 Q12.500 2 12.500 5 V8 M8 8 H13 V10 H8z M9.300 10 V13 H11.700 V10" fill="none" stroke="#3a3a3a" stroke-width="1.100"/><path d="M6 3 H8" stroke="#3a3a3a" stroke-width="1.100"/></svg>
<div class="abs" style="left:123.5px;top:920.0px;font-size:13px;font-weight:normal;color:#2f2f2f;line-height:17px;white-space:nowrap;transform:scaleX(0.9347);transform-origin:0 50%;">Office Theme</div>
<svg style="left:710.1px;top:921.5px" width="13" height="13" viewBox="0 0 13 13"><rect x=".7" y="1.800" width="10.500" height="10.500" rx="1" fill="none" stroke="#4a4a4a" stroke-width="1.200"/><path d="M3 .6 H12.300 V10" fill="none" stroke="#4a4a4a" stroke-width="1.100"/><path d="M6 4.500 V7.500 H8.500" fill="none" stroke="#4a4a4a" stroke-width="1.100"/></svg>
<svg style="left:744.0px;top:920.5px" width="14" height="15" viewBox="0 0 14 15"><path d="M5 4.500 V1 H12.500 V12 H5 V9 M5 14 H12.500" fill="none" stroke="#4a4a4a" stroke-width="1.200"/><path d="M.5 6.800 H8 M5.800 4.500 L8.200 6.800 L5.800 9.100" fill="none" stroke="#4a4a4a" stroke-width="1.200"/></svg>
<div class="abs" style="left:770px;top:920px;width:1px;height:16px;background:#dedede;"></div>
<svg style="left:785.9px;top:922.0px" width="13" height="12" viewBox="0 0 13 12"><path d="M0 2 H7 M0 6 H13 M0 10.500 H13" stroke="#4a4a4a" stroke-width="1.200"/><path d="M8.500 .5 L10.500 2.800 L12.500 .5" fill="none" stroke="#4a4a4a" stroke-width="1.100"/></svg>
<div class="abs" style="left:805.4px;top:920.0px;font-size:13px;font-weight:normal;color:#2f2f2f;line-height:17px;white-space:nowrap;transform:scaleX(0.9126);transform-origin:0 50%;">Notes</div>
<svg style="left:842.0px;top:927.5px" width="6" height="4" viewBox="0 0 6 4"><path d="M1 1 L3.0 2.8 L5 1" fill="none" stroke="#3a3a3a" stroke-width="1.4"/></svg>
<svg style="left:869.5px;top:922.0px" width="14" height="14" viewBox="0 0 14 14"><path d="M13 7 V1 H1 V11 H3.500 V13.500 L6.500 11 H8" fill="none" stroke="#4a4a4a" stroke-width="1.200" stroke-linejoin="round"/><path d="M11.500 8.500 V13.500 M9 11 H14" stroke="#4a4a4a" stroke-width="1.200"/></svg>
<div class="abs" style="left:889.7px;top:920.0px;font-size:13px;font-weight:normal;color:#2f2f2f;line-height:17px;white-space:nowrap;transform:scaleX(0.9510);transform-origin:0 50%;">Comment</div>
<div class="abs" style="left:958px;top:920px;width:1px;height:16px;background:#dedede;"></div>
<div class="abs" style="left:966.6px;top:917.5px;width:23.7px;height:21px;background:#dddddd;"></div>
<svg style="left:971.5px;top:922.0px" width="14" height="12" viewBox="0 0 14 12"><rect x=".7" y=".7" width="12.600" height="10.600" rx="1" fill="none" stroke="#4a4a4a" stroke-width="1.200"/><path d="M4.500 1 V11" stroke="#4a4a4a" stroke-width="1.100"/></svg>
<svg style="left:1004.0px;top:921.5px" width="14" height="13" viewBox="0 0 14 13"><rect x=".7" y=".7" width="5" height="4.500" fill="none" stroke="#4a4a4a" stroke-width="1.200"/><rect x="8.300" y=".7" width="5" height="4.500" fill="none" stroke="#4a4a4a" stroke-width="1.200"/><rect x=".7" y="7.800" width="5" height="4.500" fill="none" stroke="#4a4a4a" stroke-width="1.200"/><rect x="8.300" y="7.800" width="5" height="4.500" fill="none" stroke="#4a4a4a" stroke-width="1.200"/></svg>
<svg style="left:1037.0px;top:922.0px" width="14" height="12" viewBox="0 0 14 12"><path d="M7 2.500 Q4 .5 .7 1.500 V10.500 Q4 9.500 7 11.500 Q10 9.500 13.300 10.500 V1.500 Q10 .5 7 2.500z M7 2.500 V11.500" fill="none" stroke="#4a4a4a" stroke-width="1.200" stroke-linejoin="round"/></svg>
<div class="abs" style="left:1064.6px;top:920px;width:1px;height:16px;background:#dedede;"></div>
<div class="abs" style="left:1074.6px;top:918.4px;width:20.7px;height:19px;background:#e8601c;border-radius:3px"></div>
<svg style="left:1081.8px;top:924.0px" width="7" height="8" viewBox="0 0 7 8"><path d="M0 0 L7 4 L0 8z" fill="#fff"/></svg>
<div class="abs" style="left:1106px;top:920px;width:1px;height:16px;background:#dedede;"></div>
<svg style="left:1119.4px;top:921.5px" width="14" height="13" viewBox="0 0 14 13"><path d="M.7 4 V.7 H4 M10 .7 H13.300 V4 M13.300 9 V12.300 H10 M4 12.300 H.7 V9" fill="none" stroke="#4a4a4a" stroke-width="1.300"/><rect x="4" y="3.800" width="6" height="5.400" rx="1" fill="none" stroke="#4a4a4a" stroke-width="1.200"/></svg>
<div class="abs" style="left:1156.7px;top:920.5px;font-size:12.5px;font-weight:normal;color:#3a3a3a;line-height:16px;white-space:nowrap;transform:scaleX(0.8909);transform-origin:0 50%;">63%</div>
<svg style="left:1193.0px;top:927.5px" width="6" height="4" viewBox="0 0 6 4"><path d="M1 1 L3.0 2.8 L5 1" fill="none" stroke="#3a3a3a" stroke-width="1.4"/></svg>
<svg style="left:1217.8px;top:927.0px" width="11" height="2" viewBox="0 0 11 2"><rect width="11" height="2" fill="#222"/></svg>
<div class="abs" style="left:1243.8px;top:927px;width:106.2px;height:1.6px;background:#c6c6c6;border-radius:1px"></div>
<div class="abs" style="left:1243.8px;top:926.7px;width:33px;height:2.2px;background:#3a66a8;border-radius:1px"></div>
<div class="abs" style="left:1272.400px;top:923.300px;width:9px;height:9px;border-radius:50%;background:#8c9096;border:2px solid #fff;box-shadow:0 0 1px rgba(0,0,0,.3)"></div>
<svg style="left:1365.2px;top:922.5px" width="11" height="11" viewBox="0 0 11 11"><path d="M5.500 0 V11 M0 5.500 H11" stroke="#222" stroke-width="1.600"/></svg>
<!--WPSX-END-->
<!--TILES-START-->
<div class="tile" style="left:1410px;top:193.7px;width:157px;height:117.3px;background:radial-gradient(ellipse 75% 80% at 50% 50%,#3f5b63 0%,#2b4249 100%);box-shadow:inset 0 0 0 2.5px #6ad4f7"><div class="av" style="background:#78909c">I</div><div class="nm" style="letter-spacing:0px">Irene Mendoza</div></div>
<div class="tile" style="left:1579px;top:193.7px;width:157px;height:117.3px;background:radial-gradient(ellipse 75% 80% at 50% 50%,#0f5478 0%,#0b3f5e 100%)"><div class="av" style="background:#0b87d9">F</div><div class="mic" style="background:#0b3c59"><svg style="left:3.500px;top:3.500px" width="17" height="17" viewBox="0 0 24 24"><path d="M19 11h-1.7c0 .74-.16 1.43-.43 2.05l1.23 1.23c.56-.98.9-2.09.9-3.28zm-4.02.17c0-.06.02-.11.02-.17V5c0-1.66-1.34-3-3-3S9 3.340 9 5v.18l5.980 5.990zM4.270 3L3 4.270l6.010 6.010V11c0 1.660 1.330 3 2.990 3 .22 0 .44-.03.65-.08l1.660 1.660c-.71.33-1.500.52-2.310.52-2.760 0-5.300-2.100-5.300-5.100H5c0 3.410 2.720 6.230 6 6.720V21h2v-3.280c.91-.13 1.770-.45 2.540-.9L19.730 21 21 19.730 4.270 3z" fill="#a9dcfa"/></svg></div><div class="nm" style="letter-spacing:-0.05px">Ferdinand Mag-isa</div></div>
<div class="tile" style="left:1748px;top:193.7px;width:157px;height:117.3px;background:radial-gradient(ellipse 75% 80% at 50% 50%,#5e6445 0%,#4a5036 100%)"><div class="av"><svg width="48" height="48" viewBox="0 0 48 48" style="left:0;top:0"><rect width="48" height="48" fill="#fbfaf4"/><path d="M4 30 Q14 36 22 40 M6 24 Q12 30 18 34" stroke="#e8eef0" stroke-width="1.500" fill="none"/><rect x="13.200" y="8.700" width="2.600" height="13.400" rx="1" fill="#ee6a62"/><rect x="13.200" y="20" width="5" height="2.600" fill="#ee6a62"/><path d="M19.500 5 V9 M29 5 V9" stroke="#b9a7a7" stroke-width=".6"/><ellipse cx="24.300" cy="11" rx="6.400" ry="5" fill="#f4b5b8"/><ellipse cx="24.300" cy="8.800" rx="4.600" ry="2.600" fill="#efe6f2"/><circle cx="17.600" cy="11.300" r="1.500" fill="#e8524a"/><circle cx="31" cy="11.300" r="1.500" fill="#e8524a"/><circle cx="22" cy="10.800" r=".9" fill="#5b5fa8"/><circle cx="26.600" cy="10.800" r=".9" fill="#5b5fa8"/><rect x="21.500" y="14.300" width="5.500" height="1.300" fill="#b0302a"/><rect x="16.600" y="17" width="15.500" height="13.300" fill="#ef7c78"/><rect x="18.400" y="18.400" width="13" height="4.200" fill="#fff"/><rect x="18.400" y="24" width="4.500" height="4.500" fill="#fff"/><rect x="24.500" y="24" width="3" height="4.500" fill="#f6c5c0"/><rect x="28.500" y="23.500" width="2.500" height="5" fill="#e8524a"/><rect x="32.600" y="17.500" width="3.300" height="9" rx="1.500" fill="#f08a86"/><rect x="33.200" y="25" width="2.600" height="6.500" fill="#ee7a3a"/><rect x="18.400" y="31.200" width="3.800" height="10" fill="#3e66c4"/><rect x="27.300" y="31.200" width="3.800" height="10" fill="#3e66c4"/><rect x="17.700" y="40.400" width="5" height="2.200" rx="1" fill="#1f2a7c"/><rect x="26.600" y="40.400" width="5.200" height="2.200" rx="1" fill="#1f2a7c"/></svg></div><div class="mic" style="background:#1f5a0c"><svg style="left:3.500px;top:3.500px" width="17" height="17" viewBox="0 0 24 24"><path d="M19 11h-1.7c0 .74-.16 1.43-.43 2.05l1.23 1.23c.56-.98.9-2.09.9-3.28zm-4.02.17c0-.06.02-.11.02-.17V5c0-1.66-1.34-3-3-3S9 3.340 9 5v.18l5.980 5.990zM4.270 3L3 4.270l6.010 6.010V11c0 1.660 1.330 3 2.990 3 .22 0 .44-.03.65-.08l1.660 1.660c-.71.33-1.500.52-2.310.52-2.760 0-5.300-2.100-5.300-5.100H5c0 3.410 2.720 6.230 6 6.720V21h2v-3.280c.91-.13 1.770-.45 2.540-.9L19.730 21 21 19.730 4.270 3z" fill="#a6e38c"/></svg></div><div class="nm" style="letter-spacing:0px">Eric Miralles</div></div>
<div class="tile" style="left:1410px;top:323.7px;width:157px;height:117.3px;background:radial-gradient(ellipse 75% 80% at 50% 50%,#6b3b20 0%,#4e2914 100%)"><div class="av"><svg width="48" height="48" viewBox="0 0 48 48" style="left:0;top:0"><rect width="48" height="48" fill="#0b0b0d"/><path d="M5.700 12 L14 1 L34 0 L42 12 L42 38 L5.700 40z" fill="#9a9db0"/><path d="M5.700 12 L14 22 L5.700 30z" fill="#7c8798"/><path d="M30 2 L41 8 L36 24z" fill="#b9a7c9"/><path d="M36 22 L42 30 L42 38 L33 38z" fill="#1b1b22"/><path d="M35 14 L42 20 L42 12z" fill="#1b1b22"/><path d="M6 30 L14 36 L6 40z" fill="#c3c6d2"/><path d="M2 48 L4 42 Q14 34 24 35 Q36 34 44 40 L47 48z" fill="#8d5a3f"/><path d="M18 32 H30 V38 Q24 42 18 38z" fill="#b98367"/><ellipse cx="23.800" cy="23" rx="10.300" ry="13.500" fill="#c8957b"/><path d="M13.800 17 Q12.500 4 24 3.500 Q35.500 4 34.200 17 Q32 9.500 24 10 Q16 9.500 13.800 17z" fill="#1b1e24"/><path d="M17 17.500 h5 M26 17.500 h5" stroke="#3a2a25" stroke-width="1.200"/><path d="M20.500 29.500 h6.500" stroke="#8a5448" stroke-width="1"/><path d="M23 18 L22 24.500 h3" stroke="#a5745e" stroke-width=".8" fill="none"/></svg></div><div class="mic" style="background:#6e2a07"><svg style="left:3.500px;top:3.500px" width="17" height="17" viewBox="0 0 24 24"><path d="M19 11h-1.7c0 .74-.16 1.43-.43 2.05l1.23 1.23c.56-.98.9-2.09.9-3.28zm-4.02.17c0-.06.02-.11.02-.17V5c0-1.66-1.34-3-3-3S9 3.340 9 5v.18l5.980 5.990zM4.270 3L3 4.270l6.010 6.010V11c0 1.660 1.330 3 2.990 3 .22 0 .44-.03.65-.08l1.660 1.660c-.71.33-1.500.52-2.310.52-2.760 0-5.300-2.100-5.300-5.100H5c0 3.410 2.720 6.230 6 6.720V21h2v-3.280c.91-.13 1.770-.45 2.540-.9L19.730 21 21 19.730 4.270 3z" fill="#ffc9a3"/></svg></div><div class="nm" style="letter-spacing:-0.15px">Louiegene Francisco</div></div>
<div class="tile" style="left:1579px;top:323.7px;width:157px;height:117.3px;background:radial-gradient(ellipse 75% 80% at 50% 50%,#6c5235 0%,#553f27 100%)"><div class="av"><svg width="48" height="48" viewBox="0 0 48 48" style="left:0;top:0"><rect width="48" height="48" fill="#d8d0ca"/><rect y="24" width="48" height="24" fill="#b9aca0"/><path d="M0 30 H14 M30 32 H48 M0 36 H13 M31 38 H48" stroke="#8f8378" stroke-width="1.500"/><rect x="14.400" y="5" width="10.800" height="15" fill="#8d6d4d"/><rect x="16" y="8" width="6" height="9" fill="#a89a72"/><rect x="40.300" y="5.500" width="2.700" height="12" fill="#2a2a2c"/><rect x="35" y="14" width="3" height="2" fill="#9aa0a8"/><ellipse cx="41" cy="30" rx="3" ry="4.500" fill="#3a332e"/><ellipse cx="38" cy="38" rx="4" ry="2.500" fill="#4a4038"/><circle cx="23" cy="10.300" r="2.600" fill="#4a3a30"/><path d="M20 14.500 Q24 12.500 28.600 15 L29.700 25.500 H19.600z" fill="#7b6250"/><path d="M19 17 L18 25 M30 17 L30.500 25" stroke="#c59c86" stroke-width="1.600"/><rect x="13.400" y="24.500" width="4.600" height="17.500" fill="#46688e"/><path d="M19.600 25 H29.800 V33 H19.600z" fill="#a3c8ea"/><rect x="25.500" y="28" width="4.300" height="14" fill="#4d7199"/><rect x="18" y="30" width="3" height="11" fill="#c9a696"/><rect x="22" y="31" width="3" height="10" fill="#2c3340"/><rect x="13.400" y="41" width="16.600" height="4.400" rx="1" fill="#25262b"/></svg></div><div class="mic" style="background:#6a3a0a"><svg style="left:3.500px;top:3.500px" width="17" height="17" viewBox="0 0 24 24"><path d="M19 11h-1.7c0 .74-.16 1.43-.43 2.05l1.23 1.23c.56-.98.9-2.09.9-3.28zm-4.02.17c0-.06.02-.11.02-.17V5c0-1.66-1.34-3-3-3S9 3.340 9 5v.18l5.980 5.990zM4.270 3L3 4.270l6.010 6.010V11c0 1.660 1.330 3 2.990 3 .22 0 .44-.03.65-.08l1.660 1.660c-.71.33-1.500.52-2.310.52-2.760 0-5.300-2.100-5.300-5.100H5c0 3.410 2.720 6.230 6 6.720V21h2v-3.280c.91-.13 1.770-.45 2.540-.9L19.730 21 21 19.730 4.270 3z" fill="#ffcf9e"/></svg></div><div class="nm" style="letter-spacing:-0.1px">Reisem Gumamit</div></div>
<div class="tile" style="left:1748px;top:323.7px;width:157px;height:117.3px;background:radial-gradient(ellipse 75% 80% at 50% 50%,#88104a 0%,#5e0c34 100%)"><div class="av" style="background:#c2185b">I</div><div class="mic" style="background:#6d0a3b"><svg style="left:3.500px;top:3.500px" width="17" height="17" viewBox="0 0 24 24"><path d="M19 11h-1.7c0 .74-.16 1.43-.43 2.05l1.23 1.23c.56-.98.9-2.09.9-3.28zm-4.02.17c0-.06.02-.11.02-.17V5c0-1.66-1.34-3-3-3S9 3.340 9 5v.18l5.980 5.990zM4.270 3L3 4.270l6.010 6.010V11c0 1.660 1.330 3 2.990 3 .22 0 .44-.03.65-.08l1.660 1.660c-.71.33-1.500.52-2.310.52-2.760 0-5.300-2.100-5.300-5.100H5c0 3.410 2.720 6.230 6 6.720V21h2v-3.280c.91-.13 1.770-.45 2.540-.9L19.730 21 21 19.730 4.270 3z" fill="#ffb8d6"/></svg></div><div class="nm" style="letter-spacing:0px">Irene Bala</div></div>
<div class="tile" style="left:1410px;top:453.7px;width:157px;height:117.3px;background:radial-gradient(ellipse 75% 80% at 50% 50%,#46636b 0%,#2e464d 100%)"><div class="av"><svg width="48" height="48" viewBox="0 0 48 48" style="left:0;top:0"><rect width="48" height="48" fill="#fdfdfd"/><path d="M4 48 L7 41 Q15 36 24 35.500 Q33 36 41 41 L44 48z" fill="#1a1c21"/><path d="M17.500 33 L24 36 L30.600 33 L31.500 48 H16.500z" fill="#b4babe"/><path d="M18.500 30 H29.500 V35 Q24 39 18.500 35z" fill="#cfa088"/><path d="M22 41 h4.200 l-.8 2 l1.200 5 h-5 l1.200 -5z" fill="#2c333a"/><ellipse cx="23.700" cy="21" rx="10.700" ry="13.600" fill="#d8a98f"/><rect x="11.800" y="17" width="2.400" height="7" rx="1" fill="#d3a088"/><rect x="33.200" y="17" width="2.400" height="7" rx="1" fill="#d3a088"/><path d="M13 17.500 Q11 3 22 .3 Q28 -.5 34 3.500 Q36.500 9 34.600 17.500 Q33.500 9 28 7.500 Q22 6 17 9 Q14.500 12 13 17.500z" fill="#1e1a1a"/><path d="M16.500 16.600 h5.500 M26 16.600 h5.500" stroke="#4a332c" stroke-width="1.200"/><path d="M23.500 17 L22.600 23 h3" stroke="#b98670" stroke-width=".8" fill="none"/><path d="M20.500 27.200 h6.500" stroke="#a5645a" stroke-width="1"/></svg></div><div class="mic" style="background:#0a596d"><svg style="left:3.500px;top:3.500px" width="17" height="17" viewBox="0 0 24 24"><path d="M19 11h-1.7c0 .74-.16 1.43-.43 2.05l1.23 1.23c.56-.98.9-2.09.9-3.28zm-4.02.17c0-.06.02-.11.02-.17V5c0-1.66-1.34-3-3-3S9 3.340 9 5v.18l5.980 5.990zM4.270 3L3 4.270l6.010 6.010V11c0 1.660 1.330 3 2.990 3 .22 0 .44-.03.65-.08l1.660 1.660c-.71.33-1.500.52-2.310.52-2.760 0-5.300-2.100-5.300-5.100H5c0 3.410 2.720 6.230 6 6.720V21h2v-3.280c.91-.13 1.770-.45 2.540-.9L19.730 21 21 19.730 4.270 3z" fill="#9fe4f7"/></svg></div><div class="nm" style="letter-spacing:-0.15px">Keith Patrick Arandia</div></div>
<div class="tile" style="left:1579px;top:453.7px;width:157px;height:117.3px;background:radial-gradient(ellipse 75% 80% at 50% 50%,#2f5e60 0%,#23484a 100%)"><div class="av"><svg width="48" height="48" viewBox="0 0 48 48" style="left:0;top:0"><rect width="48" height="48" fill="#cdd5d8"/><rect x="18" width="20" height="48" fill="#d6dbe0"/><rect x="2.500" y="6" width="1.600" height="34" fill="#8e9aa0"/><rect x="13.200" y="0" width="4.500" height="19" fill="#1d2125"/><rect x="38.500" y="3" width="4.800" height="37" fill="#1f2024"/><circle cx="39.600" cy="20" r="1.200" fill="#9a8e90"/><path d="M7 48 L9 30 Q12 22 19 20 L25 22 L28 40 L40 42 L40 48z" fill="#e6eaec"/><path d="M9.500 28 Q12 27 13.500 30 L17 40 L14 42z" fill="#8a6a52"/><path d="M13 40 Q22 38 36 41 L36 44 Q22 42 13 43z" fill="#b09682"/><ellipse cx="23.300" cy="16.500" rx="3.700" ry="5" fill="#7b5a48"/><path d="M19.800 14 Q19.500 9 24 9.300 Q28.500 9.500 27.500 15 Q26 12 23 12.200 Q21 12.400 19.800 14z" fill="#15171a"/><path d="M24 22 L25.500 36 L28.500 38 L27.500 24z" fill="#7a6658"/><path d="M19 24 L23 37" stroke="#2d3a48" stroke-width="1"/></svg></div><div class="mic" style="background:#0a5a58"><svg style="left:3.500px;top:3.500px" width="17" height="17" viewBox="0 0 24 24"><path d="M19 11h-1.7c0 .74-.16 1.43-.43 2.05l1.23 1.23c.56-.98.9-2.09.9-3.28zm-4.02.17c0-.06.02-.11.02-.17V5c0-1.66-1.34-3-3-3S9 3.340 9 5v.18l5.980 5.990zM4.270 3L3 4.270l6.010 6.010V11c0 1.660 1.330 3 2.990 3 .22 0 .44-.03.65-.08l1.660 1.660c-.71.33-1.500.52-2.310.52-2.760 0-5.300-2.100-5.300-5.100H5c0 3.410 2.720 6.230 6 6.720V21h2v-3.280c.91-.13 1.770-.45 2.540-.9L19.730 21 21 19.730 4.270 3z" fill="#8fe9e3"/></svg></div><div class="nm" style="letter-spacing:-0.1px">Jherald Tejano</div></div>
<div class="tile" style="left:1748px;top:453.7px;width:157px;height:117.3px;background:radial-gradient(ellipse 75% 80% at 50% 50%,#6f5329 0%,#4f391c 100%)"><div class="av"><svg width="48" height="48" viewBox="0 0 48 48" style="left:0;top:0"><rect width="48" height="48" fill="#e4c9a0"/><path d="M10 6 H48 M10 10 H48 M10 14 H48 M10 18 H48 M10 22 H48 M10 26 H48 M10 30 H48" stroke="#dcbf93" stroke-width=".8"/><rect x="0" y="6" width="7.400" height="16" fill="#f2a52f"/><rect x="0" y="20.400" width="8" height="3.200" fill="#c9472c"/><rect x="6.800" y="4" width="2.400" height="40" fill="#d5612c"/><rect x="0" y="24" width="6.800" height="20" fill="#e6c9a8"/><path d="M8 48 L9.500 32 Q13 27.500 19 27.600 L29 27.600 Q34.500 28 36.500 33 L38 48z" fill="#1d2631"/><path d="M7 40 L18 28 L21 27 L22 31 L12 46z" fill="#e3a675"/><path d="M38 42 L30 28 L27 27 L26 31 L33 46z" fill="#eaa560"/><ellipse cx="24.300" cy="17.500" rx="5.300" ry="6.500" fill="#c99470"/><path d="M19 16 Q18.500 11 24.300 11 Q30 11 29.600 16 Q27 13.500 24.300 13.600 Q21 13.500 19 16z" fill="#2a201c"/><rect x="20" y="16.200" width="6.200" height="9" rx=".8" fill="#2a2226"/><rect x="20.600" y="15.500" width="5" height="1.500" fill="#c9c0c8"/><path d="M19 24.500 h8.500 v3.500 h-8.500z" fill="#e2a272"/><path d="M20 25.300 h6" stroke="#c0702e" stroke-width="1"/></svg></div><div class="mic" style="background:#5b3c08"><svg style="left:3.500px;top:3.500px" width="17" height="17" viewBox="0 0 24 24"><path d="M19 11h-1.7c0 .74-.16 1.43-.43 2.05l1.23 1.23c.56-.98.9-2.09.9-3.28zm-4.02.17c0-.06.02-.11.02-.17V5c0-1.66-1.34-3-3-3S9 3.340 9 5v.18l5.980 5.990zM4.270 3L3 4.270l6.010 6.010V11c0 1.660 1.330 3 2.990 3 .22 0 .44-.03.65-.08l1.660 1.660c-.71.33-1.500.52-2.310.52-2.760 0-5.300-2.100-5.300-5.100H5c0 3.410 2.720 6.230 6 6.720V21h2v-3.280c.91-.13 1.770-.45 2.540-.9L19.730 21 21 19.730 4.270 3z" fill="#ffd591"/></svg></div><div class="nm" style="letter-spacing:-0.1px">Moises Tolentino</div></div>
<div class="tile" style="left:1410px;top:583.7px;width:157px;height:117.3px;background:radial-gradient(ellipse 75% 80% at 50% 50%,#8b2054 0%,#691740 100%)"><div class="av" style="background:#ec407a">s</div><div class="mic" style="background:#6d0a3b"><svg style="left:3.500px;top:3.500px" width="17" height="17" viewBox="0 0 24 24"><path d="M19 11h-1.7c0 .74-.16 1.43-.43 2.05l1.23 1.23c.56-.98.9-2.09.9-3.28zm-4.02.17c0-.06.02-.11.02-.17V5c0-1.66-1.34-3-3-3S9 3.340 9 5v.18l5.980 5.990zM4.270 3L3 4.270l6.010 6.010V11c0 1.660 1.330 3 2.990 3 .22 0 .44-.03.65-.08l1.660 1.660c-.71.33-1.500.52-2.310.52-2.760 0-5.300-2.100-5.300-5.100H5c0 3.410 2.720 6.230 6 6.720V21h2v-3.280c.91-.13 1.770-.45 2.540-.9L19.730 21 21 19.730 4.270 3z" fill="#ffb8d6"/></svg></div><div class="nm" style="letter-spacing:0px">shawn morillo</div></div>
<div class="tile" style="left:1579px;top:583.7px;width:157px;height:117.3px;background:radial-gradient(ellipse 75% 80% at 50% 50%,#166c7a 0%,#0f4a55 100%)"><div class="av" style="background:#0a9bab">E</div><div class="mic" style="background:#0c4956"><svg style="left:3.500px;top:3.500px" width="17" height="17" viewBox="0 0 24 24"><path d="M19 11h-1.7c0 .74-.16 1.43-.43 2.05l1.23 1.23c.56-.98.9-2.09.9-3.28zm-4.02.17c0-.06.02-.11.02-.17V5c0-1.66-1.34-3-3-3S9 3.340 9 5v.18l5.980 5.990zM4.270 3L3 4.270l6.010 6.010V11c0 1.660 1.330 3 2.990 3 .22 0 .44-.03.65-.08l1.660 1.660c-.71.33-1.500.52-2.310.52-2.760 0-5.300-2.100-5.300-5.100H5c0 3.410 2.720 6.230 6 6.720V21h2v-3.280c.91-.13 1.770-.45 2.540-.9L19.730 21 21 19.730 4.270 3z" fill="#9fe9f5"/></svg></div><div class="nm" style="letter-spacing:-0.13px">Enrico Alfonzo Meri...</div></div>
<div class="tile" style="left:1748px;top:583.7px;width:157px;height:117.3px;background:radial-gradient(ellipse 75% 80% at 50% 50%,#0f5478 0%,#0b3f5e 100%)"><div class="av" style="background:#0b87d9">F</div><div class="mic" style="background:#0b3c59"><svg style="left:3.500px;top:3.500px" width="17" height="17" viewBox="0 0 24 24"><path d="M19 11h-1.7c0 .74-.16 1.43-.43 2.05l1.23 1.23c.56-.98.9-2.09.9-3.28zm-4.02.17c0-.06.02-.11.02-.17V5c0-1.66-1.34-3-3-3S9 3.340 9 5v.18l5.980 5.990zM4.270 3L3 4.270l6.010 6.010V11c0 1.660 1.330 3 2.990 3 .22 0 .44-.03.65-.08l1.660 1.660c-.71.33-1.500.52-2.310.52-2.760 0-5.300-2.100-5.300-5.100H5c0 3.410 2.720 6.230 6 6.720V21h2v-3.280c.91-.13 1.770-.45 2.540-.9L19.730 21 21 19.730 4.270 3z" fill="#a9dcfa"/></svg></div><div class="nm" style="letter-spacing:-0.05px">Ferdinand Mag-isa</div></div>
<div class="tile" style="left:1410px;top:713.7px;width:157px;height:117.3px;background:radial-gradient(ellipse 75% 80% at 50% 50%,#3b5f6a 0%,#2a444c 100%)"><div class="av" style="background:#78909c">M</div><div class="mic" style="background:#0a596d"><svg style="left:3.500px;top:3.500px" width="17" height="17" viewBox="0 0 24 24"><path d="M19 11h-1.7c0 .74-.16 1.43-.43 2.05l1.23 1.23c.56-.98.9-2.09.9-3.28zm-4.02.17c0-.06.02-.11.02-.17V5c0-1.66-1.34-3-3-3S9 3.340 9 5v.18l5.980 5.990zM4.270 3L3 4.270l6.010 6.010V11c0 1.660 1.330 3 2.990 3 .22 0 .44-.03.65-.08l1.660 1.660c-.71.33-1.500.52-2.310.52-2.760 0-5.300-2.100-5.300-5.100H5c0 3.410 2.720 6.230 6 6.720V21h2v-3.280c.91-.13 1.770-.45 2.540-.9L19.730 21 21 19.730 4.270 3z" fill="#9fe4f7"/></svg></div><div class="nm" style="letter-spacing:-0.1px">Michael Insigne</div></div>
<div class="tile" style="left:1579px;top:713.7px;width:157px;height:117.3px;background:radial-gradient(ellipse 75% 80% at 50% 50%,#a3520e 0%,#5c310e 100%)"><div class="av" style="background:#ef6c00">j</div><div class="mic" style="background:#6a2c07"><svg style="left:3.500px;top:3.500px" width="17" height="17" viewBox="0 0 24 24"><path d="M19 11h-1.7c0 .74-.16 1.43-.43 2.05l1.23 1.23c.56-.98.9-2.09.9-3.28zm-4.02.17c0-.06.02-.11.02-.17V5c0-1.66-1.34-3-3-3S9 3.340 9 5v.18l5.980 5.990zM4.270 3L3 4.270l6.010 6.010V11c0 1.660 1.330 3 2.990 3 .22 0 .44-.03.65-.08l1.660 1.660c-.71.33-1.500.52-2.310.52-2.760 0-5.300-2.100-5.300-5.100H5c0 3.410 2.720 6.230 6 6.720V21h2v-3.280c.91-.13 1.770-.45 2.540-.9L19.730 21 21 19.730 4.270 3z" fill="#ffc9a3"/></svg></div><div class="nm" style="letter-spacing:-0.1px">joel Dupalco</div></div>
<div class="tile" style="left:1748px;top:713.7px;width:157px;height:117.3px;background:radial-gradient(ellipse 75% 80% at 50% 50%,#6c5b3b 0%,#51432a 100%)"><div class="av"><svg width="48" height="48" viewBox="0 0 48 48" style="left:0;top:0"><rect width="48" height="48" fill="#cdb791"/><rect width="48" height="21" fill="#a9d5f0"/><path d="M28 4 Q40 6 46 16 L46 21 L28 21z" fill="#e9f1fa"/><ellipse cx="20" cy="7" rx="13" ry="6.500" fill="#3f7050"/><ellipse cx="30" cy="3.500" rx="7" ry="3.500" fill="#4f8560"/><rect x="20.500" y="10" width="2.600" height="12" fill="#5a5f58"/><path d="M30 16 Q38 13 47 16 V24 H30z" fill="#a0846a"/><path d="M34 18 h8 v4 h-8z" fill="#5c4a42"/><ellipse cx="8" cy="19" rx="5" ry="2" fill="#8fb07a"/><rect x="3.500" y="21" width="12" height="7.500" fill="#63c0a8"/><rect x="0" y="22.500" width="4" height="2" fill="#2a2f2a"/><path d="M0 34 L48 31 V48 H0z" fill="#9c9189"/><path d="M4 36 L40 44" stroke="#7f766f" stroke-width="2"/><path d="M16 44 L24 42 L26 46 L18 47z" fill="#d8dadd"/><circle cx="26" cy="14.500" r="2.500" fill="#2a2530"/><path d="M24 13 L23 20 L26 20z" fill="#2a2a3a"/><path d="M22.800 18 Q27 16.500 31.200 18.500 L31 26.500 H23z" fill="#ece8ee"/><path d="M23 22 h8" stroke="#d8a8b0" stroke-width="1"/><path d="M22.500 26.400 H31.400 L31 33.500 H27.500 L27 30 L26.500 33.500 H22.800z" fill="#191c22"/><path d="M23.500 33.500 h2.500 v6 h-2z M28 33.500 h2.500 l-.5 6 h-2z" fill="#c79a80"/></svg></div><div class="mic" style="background:#6b3f07"><svg style="left:3.500px;top:3.500px" width="17" height="17" viewBox="0 0 24 24"><path d="M19 11h-1.7c0 .74-.16 1.43-.43 2.05l1.23 1.23c.56-.98.9-2.09.9-3.28zm-4.02.17c0-.06.02-.11.02-.17V5c0-1.66-1.34-3-3-3S9 3.340 9 5v.18l5.980 5.990zM4.270 3L3 4.270l6.010 6.010V11c0 1.660 1.330 3 2.990 3 .22 0 .44-.03.65-.08l1.660 1.660c-.71.33-1.500.52-2.310.52-2.760 0-5.300-2.100-5.300-5.100H5c0 3.410 2.720 6.230 6 6.720V21h2v-3.280c.91-.13 1.770-.45 2.540-.9L19.730 21 21 19.730 4.270 3z" fill="#ffcf9e"/></svg></div><div class="nm" style="letter-spacing:-0.1px">jelly sacupayo</div></div>
<div class="tile" style="left:1442px;top:843.4px;width:209px;height:116.4px;background:radial-gradient(ellipse 75% 80% at 50% 50%,#1d4075 0%,#162e58 100%)"><div class="av"><svg width="48" height="48" viewBox="0 0 48 48" style="left:0;top:0"><defs><radialGradient id="ang" cx=".5" cy=".42" r=".55"><stop offset="0" stop-color="#7b7c88"/><stop offset=".55" stop-color="#555a68"/><stop offset="1" stop-color="#1f2d4f"/></radialGradient></defs><rect width="48" height="48" fill="url(#ang)"/><path d="M2 48 L4 36 Q12 29 24 27.500 Q36 29 44 36 L46 48z" fill="#17171b"/><path d="M11 29.500 Q24 24 37.500 29.500 L24 43.500z" fill="#1f7a4e"/><path d="M20.500 24 L24.300 29 L28.200 24 L29 29.500 L24.300 33 L19.500 29.500z" fill="#e6ece6"/><path d="M23.200 29 h2.400 l.7 6 -1.900 2 -1.900 -2z" fill="#2c3a33"/><circle cx="23.800" cy="43.900" r="1.800" fill="#d9cfc0"/><ellipse cx="24" cy="16.500" rx="6.600" ry="9.200" fill="#d9987c"/><path d="M16.800 15 Q14.500 4 23 1.500 Q33 1 32 13 L31 15 Q30 8.500 24.500 8.500 Q18.500 8.500 16.800 15z" fill="#121114"/><path d="M19.800 14.500 h3.400 M25.500 14.500 h3.400" stroke="#4a2e28" stroke-width=".9"/><path d="M21.500 21.500 h5" stroke="#b4625a" stroke-width=".9"/></svg></div><div class="mic" style="background:#0c399b"><svg style="left:3.500px;top:3.500px" width="17" height="17" viewBox="0 0 24 24"><path d="M19 11h-1.7c0 .74-.16 1.43-.43 2.05l1.23 1.23c.56-.98.9-2.09.9-3.28zm-4.02.17c0-.06.02-.11.02-.17V5c0-1.66-1.34-3-3-3S9 3.340 9 5v.18l5.980 5.990zM4.270 3L3 4.270l6.010 6.010V11c0 1.660 1.330 3 2.990 3 .22 0 .44-.03.65-.08l1.660 1.660c-.71.33-1.500.52-2.310.52-2.760 0-5.300-2.100-5.300-5.100H5c0 3.410 2.720 6.230 6 6.720V21h2v-3.280c.91-.13 1.770-.45 2.540-.9L19.730 21 21 19.730 4.270 3z" fill="#b3ccff"/></svg></div><div class="nm" style="letter-spacing:-0.26px">Angelo Dela Rosa</div></div>
<div class="tile" style="left:1663px;top:843.4px;width:210px;height:116.4px;background:radial-gradient(ellipse 75% 80% at 50% 50%,#5a7379 0%,#3c545a 100%)"><div class="av"><svg width="48" height="48" viewBox="0 0 48 48" style="left:0;top:0"><rect width="48" height="48" fill="#fff"/><defs><path id="gc" d="M24 24 m-17.200 0 a17.200 17.200 0 1 1 34.400 0 a17.200 17.200 0 1 1 -34.400 0"/></defs><text font-family="Liberation Sans" font-weight="bold" font-size="4.600" fill="#1d1f7c" transform="rotate(-38 24 24)"><textPath href="#gc" startOffset="0" textLength="106" lengthAdjust="spacingAndGlyphs">GLOBE MARITIME TRAINING CENTER · MANILA INC ·</textPath></text><g stroke="#f7ef3a" stroke-width="2.200" fill="none"><circle cx="23.500" cy="24.500" r="9.600"/><path d="M23.500 14 V9.500 M16.500 17 L13 13.500 M30.500 17 L34 13.500 M13.500 24 H9 M15.500 31 L11.500 34.500"/></g><circle cx="22.500" cy="24.500" r="7.300" fill="#58bdea"/><path d="M17 26 Q20 19 27 18.500 Q22 21 20.500 28z" fill="#a7def6"/><path d="M17 33.700 H33.600 L36 25.500 L36 22z" fill="#101114"/><path d="M16.500 32.500 L36.400 20.300 L36.400 22.300 L17.500 33.800z" fill="#e23b4e"/><path d="M26 26.500 L36.600 19.500 L36.600 20.800 L27 27.500z" fill="#f08a2c"/><path d="M20.500 27.500 L22 23 L23.500 25 L25.500 22.800 L28.500 23.500 L24 28z" fill="#d9364a"/></svg></div><div class="mic" style="background:#0a596d"><svg style="left:3.500px;top:3.500px" width="17" height="17" viewBox="0 0 24 24"><path d="M19 11h-1.7c0 .74-.16 1.43-.43 2.05l1.23 1.23c.56-.98.9-2.09.9-3.28zm-4.02.17c0-.06.02-.11.02-.17V5c0-1.66-1.34-3-3-3S9 3.340 9 5v.18l5.980 5.990zM4.270 3L3 4.270l6.010 6.010V11c0 1.660 1.330 3 2.990 3 .22 0 .44-.03.65-.08l1.660 1.660c-.71.33-1.500.52-2.310.52-2.760 0-5.300-2.100-5.300-5.100H5c0 3.410 2.720 6.230 6 6.720V21h2v-3.280c.91-.13 1.770-.45 2.540-.9L19.730 21 21 19.730 4.270 3z" fill="#9fe4f7"/></svg></div><div class="nm" style="letter-spacing:-0.27px">GMTC TESDA Manila</div></div>
<!--TILES-END-->

<!--CONTROLS-START-->
<div class="abs" style="left:24px;top:990px;font-size:16px;font-weight:bold;color:#f1f1f1;line-height:20px;white-space:nowrap">5:25 PM</div>
<div class="abs" style="left:96px;top:992px;width:1px;height:16px;background:#e8e8e8"></div>
<div class="abs" style="left:109px;top:990px;font-size:16px;font-weight:bold;color:#f1f1f1;line-height:20px;white-space:nowrap;letter-spacing:.35px">xet-umdj-zce</div>
<!-- mic group -->
<div class="abs" style="left:678px;top:976px;width:88px;height:48px;border-radius:13px;background:#601410"></div>
<div class="abs" style="left:718px;top:976px;width:48px;height:48px;border-radius:12px;background:#fcdfdb"></div>
<svg style="left:696px;top:996px" width="11" height="8" viewBox="0 0 11 8"><path d="M1.200 6.500 L5.500 2.200 L9.800 6.500" fill="none" stroke="#f9cfc9" stroke-width="1.900"/></svg>
<svg style="left:730px;top:988px" width="24" height="24" viewBox="0 0 24 24"><path d="M10.800 4.900c0-.66.540-1.200 1.200-1.200s1.200.54 1.200 1.200l-.01 3.910L15 10.600V5c0-1.660-1.340-3-3-3-1.540 0-2.790 1.160-2.960 2.650l1.760 1.760V4.900zM19 11h-1.700c0 .58-.1 1.130-.27 1.640l1.270 1.270c.44-.88.7-1.870.7-2.910zM4.410 2.860L3 4.270l6 6V11c0 1.660 1.340 3 3 3 .23 0 .44-.03.65-.08l1.660 1.660c-.71.33-1.500.52-2.310.52-2.760 0-5.300-2.100-5.300-5.100H5c0 3.410 2.720 6.230 6 6.720V21h2v-3.280c.91-.13 1.770-.45 2.550-.9l4.200 4.200 1.410-1.410L4.410 2.860z" fill="#5c1711"/></svg>
<!-- cam group -->
<div class="abs" style="left:774px;top:976px;width:88px;height:48px;border-radius:13px;background:#601410"></div>
<div class="abs" style="left:814px;top:976px;width:48px;height:48px;border-radius:12px;background:#fcdfdb"></div>
<svg style="left:792px;top:996px" width="11" height="8" viewBox="0 0 11 8"><path d="M1.200 6.500 L5.500 2.200 L9.800 6.500" fill="none" stroke="#f9cfc9" stroke-width="1.900"/></svg>
<svg style="left:826px;top:988px" width="24" height="24" viewBox="0 0 24 24"><path d="M9.560 8l-2-2-4.150-4.140L2 3.270 4.730 6H4c-.55 0-1 .45-1 1v10c0 .55.450 1 1 1h12c.21 0 .39-.08.550-.18L19.730 21l1.410-1.410-8.860-8.860L9.560 8zM5 16V8h1.730l8 8H5zm10-8v2.610l6 6V6.500l-4 4V7c0-.55-.45-1-1-1h-5.610l2 2H15z" fill="#5c1711"/></svg>
<!-- present -->
<div class="abs" style="left:870px;top:976px;width:56px;height:48px;border-radius:24px;background:#333537"></div>
<svg style="left:886px;top:989px" width="24" height="22" viewBox="0 0 24 22"><rect x="2.200" y="2.200" width="19.600" height="13.600" fill="none" stroke="#e8eaed" stroke-width="2"/><path d="M0 19.500 H24" stroke="#e8eaed" stroke-width="2"/><path d="M12 13 V7.500 M8.500 9.500 L12 6 L15.500 9.500" stroke="#e8eaed" stroke-width="2" fill="none"/></svg>
<!-- emoji -->
<div class="abs" style="left:934px;top:976px;width:56px;height:48px;border-radius:24px;background:#333537"></div>
<svg style="left:951px;top:989px" width="22" height="22" viewBox="0 0 22 22"><circle cx="11" cy="11" r="9.300" fill="none" stroke="#e8eaed" stroke-width="2"/><circle cx="7.600" cy="8.300" r="1.500" fill="#e8eaed"/><circle cx="14.400" cy="8.300" r="1.500" fill="#e8eaed"/><path d="M5.500 12.300 H16.500 A5.500 5.200 0 0 1 5.500 12.300z" fill="#e8eaed"/></svg>
<!-- cc -->
<div class="abs" style="left:998px;top:976px;width:56px;height:48px;border-radius:24px;background:#333537"></div>
<svg style="left:1016px;top:992px" width="20" height="16" viewBox="0 0 20 16"><rect x="1" y="1" width="18" height="14" fill="none" stroke="#e8eaed" stroke-width="2"/><path d="M8.500 6 H4.800 V10 H8.500 M15.200 6 H11.500 V10 H15.200" fill="none" stroke="#e8eaed" stroke-width="1.800"/></svg>
<!-- hand -->
<div class="abs" style="left:1062px;top:976px;width:56px;height:48px;border-radius:24px;background:#333537"></div>
<svg style="left:1078px;top:988px" width="24" height="24" viewBox="0 0 24 24"><path d="M21 7c0-1.380-1.120-2.500-2.500-2.500-.17 0-.34.02-.5.050V4c0-1.380-1.120-2.500-2.500-2.500-.23 0-.46.030-.67.090C14.460.66 13.560 0 12.500 0c-1.230 0-2.250.89-2.460 2.060C9.870 2.020 9.690 2 9.500 2 8.120 2 7 3.120 7 4.500v5.890c-.34-.31-.76-.54-1.220-.66L5.010 9.520c-.83-.23-1.700.09-2.190.830-.38.570-.4 1.310-.15 1.950l2.560 6.430C6.490 21.910 9.570 24 12.980 24h0c4.420 0 8.020-3.580 8.020-8V7zM19 16c0 3.310-2.690 6-6.020 6h0c-2.610 0-4.950-1.590-5.910-4.010l-2.600-6.540 .53.140c.46.120.83.460 1 .9L7 15h2V4.500c0-.28.220-.5.500-.5s.5.220.5.500V12h2V2.500c0-.28.220-.5.500-.5s.5.220.5.500V12h2V4c0-.28.220-.5.500-.5s.5.220.5.500v8h2V7c0-.28.220-.5.500-.5s.5.220.5.500V16z" fill="#e8eaed" transform="scale(.96) translate(.5 .5)"/></svg>
<!-- more -->
<div class="abs" style="left:1126px;top:976px;width:36px;height:48px;border-radius:18px;background:#333537"></div>
<svg style="left:1141px;top:991px" width="6" height="18" viewBox="0 0 6 18"><circle cx="3" cy="2.500" r="2" fill="#e8eaed"/><circle cx="3" cy="9" r="2" fill="#e8eaed"/><circle cx="3" cy="15.500" r="2" fill="#e8eaed"/></svg>
<!-- hangup -->
<div class="abs" style="left:1170px;top:976px;width:72px;height:48px;border-radius:24px;background:#dc362e"></div>
<svg style="left:1194px;top:988px" width="24" height="24" viewBox="0 0 24 24"><path d="M12 9c-1.600 0-3.150.25-4.600.72v3.100c0 .39-.23.740-.56.900-.98.490-1.870 1.120-2.660 1.850-.18.180-.43.280-.7.280-.28 0-.53-.11-.71-.29L.29 13.080c-.18-.17-.29-.42-.29-.7 0-.28.110-.53.290-.71C3.340 8.780 7.460 7 12 7s8.660 1.780 11.710 4.670c.18.180.29.430.29.710 0 .28-.11.530-.29.710l-2.480 2.480c-.18.180-.43.290-.71.290-.27 0-.52-.11-.7-.28-.79-.74-1.690-1.360-2.670-1.850-.33-.16-.56-.5-.56-.9v-3.100C15.150 9.250 13.600 9 12 9z" fill="#fff"/></svg>
<!-- right icons -->
<svg style="left:1777px;top:989px" width="22" height="22" viewBox="0 0 22 22"><circle cx="11" cy="11" r="9.200" fill="none" stroke="#fff" stroke-width="2"/><rect x="10" y="9.600" width="2" height="6.200" fill="#fff"/><circle cx="11" cy="6.800" r="1.200" fill="#fff"/></svg>
<svg style="left:1825px;top:990px" width="22" height="20" viewBox="0 0 22 20"><path d="M1.200 1 H20.800 V14.500 H5 L1.200 18.300z" fill="none" stroke="#fff" stroke-width="2" stroke-linejoin="miter"/><path d="M5 5 H17 M5 7.800 H17 M5 10.600 H13" stroke="#fff" stroke-width="1.700"/></svg>
<div class="abs" style="left:1840.500px;top:982px;width:9px;height:9px;border-radius:50%;background:#8ab4f8;box-shadow:0 0 0 1.500px #131314"></div>
<svg style="left:1875px;top:992px" width="18" height="16" viewBox="0 0 18 16"><g fill="#fff"><circle cx="2.200" cy="2.200" r="2"/><circle cx="9" cy="2.200" r="2"/><circle cx="15.800" cy="2.200" r="2"/><circle cx="2.200" cy="8" r="2"/><circle cx="9" cy="8" r="2"/><circle cx="15.800" cy="8" r="2"/><circle cx="2.200" cy="13.800" r="2"/><circle cx="9" cy="13.800" r="2"/><circle cx="15.800" cy="13.800" r="2"/></g></svg>
<!--CONTROLS-END-->

<!-- TASKBAR -->
<div id="taskbar" class="abs"></div>
<!--TASKBAR-START-->
<!-- start -->
<svg style="left:16px;top:1052px" width="16" height="16" viewBox="0 0 16 16"><path d="M0 2.300 L6.500 1.400 V7.600 H0z M7.400 1.250 L16 0 V7.600 H7.400z M0 8.400 H6.500 V14.600 L0 13.700z M7.400 8.400 H16 V16 L7.400 14.750z" fill="#fff"/></svg>
<svg style="left:63px;top:1051px" width="18" height="18" viewBox="0 0 18 18"><circle cx="11.500" cy="6.500" r="5" fill="none" stroke="#fff" stroke-width="1.300"/><path d="M8 10 L1 17" stroke="#fff" stroke-width="1.300"/></svg>
<svg style="left:110px;top:1053px" width="20" height="14" viewBox="0 0 20 14"><rect x="4.500" y=".7" width="11" height="12.600" fill="none" stroke="#fff" stroke-width="1.300"/><path d="M2.500 2.500 H.7 V11.500 H2.500 M17.500 2.500 H19.300 V11.500 H17.500" fill="none" stroke="#fff" stroke-width="1.300"/></svg>
<!-- snipping -->
<svg style="left:158px;top:1047px" width="26" height="26" viewBox="0 0 26 26"><ellipse cx="12" cy="12" rx="10.500" ry="6.500" transform="rotate(-22 12 12)" fill="#b98a8a"/><ellipse cx="12.500" cy="10" rx="10" ry="5.800" transform="rotate(-22 12.500 10)" fill="#f3f4f6" stroke="#d23a3a" stroke-width="1.400"/><path d="M10 6 L16.500 19 M17 7 L13 18" stroke="#8a9097" stroke-width="1.200"/><circle cx="13" cy="21.500" r="2.300" fill="none" stroke="#2f7fd6" stroke-width="1.500"/><circle cx="19.500" cy="20.500" r="2.300" fill="none" stroke="#2f7fd6" stroke-width="1.500"/></svg>
<!-- calculator -->
<svg style="left:211px;top:1048px" width="18" height="24" viewBox="0 0 18 24"><rect width="18" height="24" fill="#fff"/><rect x="2" y="2.200" width="14" height="3.600" fill="#000"/><g fill="#000"><path d="M2 8.300h3.400v2.900H2z M7.300 8.300h3.400v2.900H7.300z M12.600 8.300H16v2.900h-3.400z M2 13.200h3.400v2.900H2z M7.300 13.200h3.400v2.900H7.300z M12.600 13.200H16v2.900h-3.400z M2 18.100h3.400V21H2z M7.300 18.100h3.400V21H7.300z M12.600 18.100H16V21h-3.400z"/></g><g stroke="#fff" stroke-width=".9"><path d="M2.500 10.900 L5 8.600 M7.800 10.900 L10.300 8.600 M13.100 10.900 L15.600 8.600 M2.500 15.800 L5 13.500 M7.800 15.800 L10.300 13.500 M13.100 15.800 L15.600 13.500 M2.500 20.700 L5 18.400 M7.800 20.700 L10.300 18.400 M13.100 20.700 L15.600 18.400"/></g></svg>
<!-- explorer -->
<svg style="left:257px;top:1050px" width="23" height="20" viewBox="0 0 23 20"><path d="M1 2 H8.500 L10.500 3.800 H22 V18 H1z" fill="#f5c84c"/><path d="M1 5.500 H22 V18 H1z" fill="#fbe08a"/><path d="M1 2 H8.500 L10.500 3.800 H1z" fill="#e0a82e"/><path d="M5 11.500 H18 V18.500 H14.500 V15 H8.500 V18.500 H5z" fill="#3f9fe0"/><rect x="5" y="11.500" width="13" height="2" fill="#6fc0f2"/></svg>
<!-- chrome active -->
<div class="abs" style="left:294px;top:1040px;width:47px;height:40px;background:#363636"></div>
<div class="abs" style="left:294px;top:1078px;width:47px;height:2px;background:#d6c4b1"></div>
<div class="abs" style="left:347px;top:1078px;width:40px;height:2px;background:#d6c4b1"></div>
<div class="abs" style="left:396px;top:1078px;width:40px;height:2px;background:#d6c4b1"></div>
<svg style="left:306px;top:1048px" width="24" height="24" viewBox="0 0 24 24"><circle cx="12" cy="12" r="11.500" fill="#fff"/><path d="M12 12 L2.050 6.250 A11.500 11.500 0 0 1 21.950 6.250z" fill="#ea4335"/><path d="M12 12 L21.950 6.250 A11.500 11.500 0 0 1 12 23.500z" fill="#fbbc04"/><path d="M12 12 L12 23.500 A11.500 11.500 0 0 1 2.050 6.250z" fill="#34a853"/><path d="M12 6.250 H21.950 A11.500 11.500 0 0 0 2.050 6.250 L7 14.900z" fill="#ea4335"/><path d="M17 14.900 L12 23.500 A11.500 11.500 0 0 0 21.950 6.250 H12z" fill="#fbbc04"/><path d="M7 14.900 L2.050 6.250 A11.500 11.500 0 0 0 12 23.500 L17 14.900z" fill="#34a853"/><circle cx="12" cy="12" r="5.600" fill="#fff"/><circle cx="12" cy="12" r="4.400" fill="#4285f4"/></svg>
<!-- tiktok -->
<svg style="left:358px;top:1050px" width="18" height="20" viewBox="0 0 18 20"><path d="M9.500 1.500 h2.600 c.2 2.100 1.500 3.400 3.600 3.600 v2.700 c-1.400 0-2.600-.45-3.600-1.200 v5.800 c0 3-2.300 5.100-5.100 5.100 S2 15.200 2 12.400 c0-3 2.600-5.300 5.700-4.900 v2.800 c-1.500-.4-2.900.6-2.900 2.100 s1.100 2.300 2.300 2.300 2.400-.9 2.400-2.600z" fill="#25f4ee" transform="translate(-.7 -.5)"/><path d="M9.500 1.500 h2.600 c.2 2.100 1.500 3.400 3.600 3.600 v2.700 c-1.400 0-2.600-.45-3.600-1.200 v5.800 c0 3-2.300 5.100-5.100 5.100 S2 15.200 2 12.400 c0-3 2.600-5.300 5.700-4.900 v2.800 c-1.500-.4-2.900.6-2.900 2.100 s1.100 2.300 2.300 2.300 2.400-.9 2.400-2.600z" fill="#fe2c55" transform="translate(.7 .5)"/><path d="M9.500 1.500 h2.600 c.2 2.100 1.500 3.400 3.600 3.600 v2.700 c-1.400 0-2.600-.45-3.600-1.200 v5.800 c0 3-2.300 5.100-5.100 5.100 S2 15.200 2 12.400 c0-3 2.600-5.300 5.700-4.900 v2.800 c-1.500-.4-2.900.6-2.900 2.100 s1.100 2.300 2.300 2.300 2.400-.9 2.400-2.600z" fill="#fff"/></svg>
<!-- viber -->
<svg style="left:404px;top:1048px" width="24" height="25" viewBox="0 0 24 25"><path d="M12 1 C5.500 1 1.500 4 1.500 10.500 c0 4 1.500 6.500 4 8 V23.500 l4-3.600 c.8.100 1.600.1 2.500.1 6.500 0 10.500-3 10.500-9.500 S18.500 1 12 1z" fill="#7d5ce6" stroke="#c9bdf7" stroke-width="1.200"/><path d="M8 5.500 c.5-.3 1.100-.2 1.400.3 l1 1.700 c.3.500.1 1-.3 1.400 l-.6.500 c.5 1.500 1.700 2.800 3.200 3.400 l.6-.7 c.4-.4.900-.5 1.400-.2 l1.700 1.100 c.5.300.6.900.3 1.400 l-.7 1 c-.4.500-1 .7-1.600.5 C10.500 14.600 7.700 11.700 6.600 8 c-.2-.6 0-1.200.5-1.600z" fill="#fff"/><path d="M12.500 5.200 c2.500.2 4.300 2 4.500 4.500 M12.700 7.200 c1.400.2 2.300 1.100 2.500 2.500" stroke="#fff" stroke-width=".9" fill="none"/></svg>
<!-- tray -->
<svg style="left:1660px;top:1051px" width="18" height="18" viewBox="0 0 18 18"><circle cx="12" cy="4.500" r="2.600" fill="none" stroke="#fff" stroke-width="1.200"/><path d="M9 10.500 Q12 7.500 15.500 10.500" fill="none" stroke="#fff" stroke-width="1.200"/><circle cx="5.500" cy="9.500" r="2.600" fill="none" stroke="#fff" stroke-width="1.200"/><path d="M1 17 Q2 12.500 5.500 12.500 Q9 12.500 10 17" fill="none" stroke="#fff" stroke-width="1.200"/></svg>
<svg style="left:1698px;top:1055px" width="14" height="9" viewBox="0 0 14 9"><path d="M1 8 L7 2 L13 8" fill="none" stroke="#fff" stroke-width="1.300"/></svg>
<svg style="left:1720px;top:1053px" width="18" height="15" viewBox="0 0 18 15"><rect x="2.500" y="1.500" width="14" height="9" fill="none" stroke="#fff" stroke-width="1.200"/><path d="M9.500 10.500 V13.500 M5.500 13.700 H13.500" stroke="#fff" stroke-width="1.200"/><rect x=".6" y=".6" width="4.500" height="3.500" fill="#000" stroke="#fff" stroke-width="1"/><path d="M2.800 4 V13.500 H5" stroke="#fff" stroke-width="1" fill="none"/></svg>
<svg style="left:1744px;top:1052px" width="18" height="16" viewBox="0 0 18 16"><path d="M1 5.500 H3.800 L7.500 2 V14 L3.800 10.500 H1z" fill="none" stroke="#fff" stroke-width="1.100"/><path d="M10 5.500 Q11.500 8 10 10.500 M12.200 3.700 Q14.800 8 12.200 12.300 M14.400 2 Q18.300 8 14.400 14" fill="none" stroke="#fff" stroke-width="1.100"/></svg>
<svg style="left:1772px;top:1051px" width="18" height="18" viewBox="0 0 18 18"><path d="M6 15 L12.500 2.500 Q13.800 1 15 2.200 Q15.800 3.300 15 4.500 L8.500 16 L5.500 17z" fill="none" stroke="#fff" stroke-width="1.100"/><path d="M5 11.500 Q1 12.500 1.500 15 Q2.300 17.300 5.500 16.500 M13 9.500 Q17 9 16.500 11.500 Q16 13 13.500 12.500" fill="none" stroke="#fff" stroke-width="1.100"/></svg>
<div class="abs" style="left:1803px;top:1043px;width:60px;text-align:center;font-size:11.400px;line-height:16px;color:#fff;white-space:nowrap;letter-spacing:-.25px">5:25 PM</div>
<div class="abs" style="left:1800px;top:1061px;width:66px;text-align:center;font-size:11.400px;line-height:16px;color:#fff;white-space:nowrap;letter-spacing:-.1px">10/02/2026</div>
<svg style="left:1879px;top:1052px" width="16" height="16" viewBox="0 0 16 16"><path d="M0 0 H16 V11.500 H12 V15 L8.500 11.500 H0z" fill="#fff"/><path d="M3 3 H13 M3 5.700 H13 M3 8.400 H10" stroke="#000" stroke-width="1"/></svg>
<div class="abs" style="left:1886px;top:1059.500px;width:17px;height:17px;border-radius:50%;background:#3b3b3b;border:1px solid #6a6a6a;color:#fff;font-size:11px;line-height:15px;text-align:center">1</div>
<div class="abs" style="left:1915px;top:1040px;width:1px;height:40px;background:#555"></div>
<!--TASKBAR-END-->

</div>
</body>
</html>
